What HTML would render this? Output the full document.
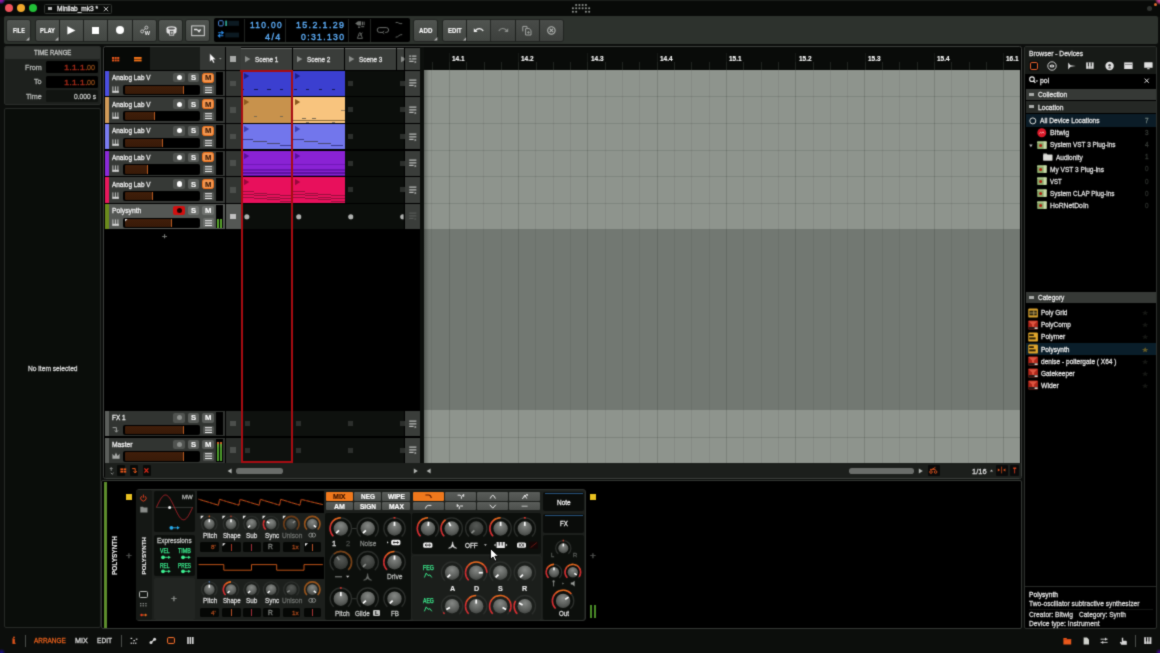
<!DOCTYPE html>
<html lang="en"><head><meta charset="utf-8"><title>Bitwig Studio - Minilab_mk3</title>
<style>
html,body{margin:0;padding:0;background:#0c0e0c;}
body{width:1160px;height:653px;overflow:hidden;position:relative;font-family:"Liberation Sans",sans-serif;}
#app{position:absolute;left:0;top:0;width:1160px;height:653px;overflow:hidden;background:#0c0e0c;filter:url(#soft);}
section{position:absolute;left:0;top:0;width:0;height:0;}
section>div,section>svg,section>span{position:absolute;display:block;}
.t{white-space:nowrap;transform-origin:0 50%;-webkit-text-stroke:0.26px;}
svg{overflow:visible;}
</style></head><body>
<svg width="0" height="0" style="position:absolute" aria-hidden="true"><filter id="soft" x="0" y="0" width="100%" height="100%" color-interpolation-filters="sRGB"><feConvolveMatrix order="3" kernelMatrix="0.025 0.1 0.025 0.1 0.5 0.1 0.025 0.1 0.025" edgeMode="duplicate" preserveAlpha="true"/></filter></svg>
<div id="app">
<section id="top">
<div style="left:0px;top:0px;width:1160px;height:17px;background:#080a08;"></div>
<div style="left:5.2px;top:4.3px;width:7.6px;height:7.6px;background:#f0545c;border-radius:4px;"></div>
<div style="left:17.2px;top:4.3px;width:7.6px;height:7.6px;background:#f0a82c;border-radius:4px;"></div>
<div style="left:29.2px;top:4.3px;width:7.6px;height:7.6px;background:#22c038;border-radius:4px;"></div>
<div style="left:43.5px;top:3.5px;width:68px;height:10px;background:#0a0c0a;border-radius:1.5px;border:1px solid #30332f;box-sizing:border-box;"></div>
<div style="left:48px;top:7px;width:3.6px;height:3.3px;background:#b8b8b8;"></div>
<span class="t" style="left:56.5px;top:4px;font-size:7.22px;line-height:9px;color:#f0f0f0;transform:scaleX(0.904);">Minilab_mk3 *</span>
<svg style="left:102.5px;top:5.5px;" width="6" height="6" viewBox="0 0 6 6"><path d="M0.8 0.8L5.2 5.2M5.2 0.8L0.8 5.2" stroke="#d0d0d0" stroke-width="0.9" fill="none"/></svg>
<svg style="left:0px;top:0px;" width="1160" height="20" viewBox="0 0 1160 20"><circle cx="576.15" cy="5" r="1.05" fill="#8e928e"/><circle cx="579.4" cy="5" r="1.05" fill="#8e928e"/><circle cx="582.65" cy="5" r="1.05" fill="#8e928e"/><circle cx="585.9" cy="5" r="1.05" fill="#8e928e"/><circle cx="572.9" cy="8.3" r="1.05" fill="#8e928e"/><circle cx="576.15" cy="8.3" r="1.05" fill="#8e928e"/><circle cx="579.4" cy="8.3" r="1.05" fill="#8e928e"/><circle cx="582.65" cy="8.3" r="1.05" fill="#8e928e"/><circle cx="585.9" cy="8.3" r="1.05" fill="#8e928e"/><circle cx="589.15" cy="8.3" r="1.05" fill="#8e928e"/><circle cx="572.9" cy="11.7" r="1.05" fill="#8e928e"/><circle cx="576.15" cy="11.7" r="1.05" fill="#8e928e"/><circle cx="585.9" cy="11.7" r="1.05" fill="#8e928e"/><circle cx="589.15" cy="11.7" r="1.05" fill="#8e928e"/></svg>
<div style="left:1146.9px;top:5.8px;width:5.2px;height:5.2px;background:#303330;border-radius:3px;"></div>
<div style="left:1153.5px;top:2.6px;width:3.8px;height:3.8px;background:#e06c2c;border-radius:2px;"></div>
<div style="left:0px;top:0px;width:1160px;height:0.8px;background:#1a1d1a;"></div>
<div style="left:0px;top:0px;width:6px;height:5px;background:radial-gradient(circle at 1px 0px,#b41090 0,#6a1c9a 2px,rgba(60,20,120,0) 4.4px);"></div>
<div style="left:1153px;top:0px;width:7px;height:5px;background:radial-gradient(circle at 7px 0px,#d648a8 0,#b03c78 2.4px,rgba(120,30,60,0) 5px);"></div>
<div style="left:3.5px;top:16.2px;width:1154px;height:27.6px;background:#2d322d;border-radius:2px;"></div>
<div style="left:7px;top:19.6px;width:23.2px;height:21px;background:linear-gradient(#505450,#434743);border-radius:2px 2px 2px 2px;box-shadow:0 0 0 0.8px #1f211f;"></div>
<span class="t" style="left:12.8px;top:26px;font-size:7.48px;line-height:9px;color:#ffffff;transform:scaleX(0.728);font-weight:700;-webkit-text-stroke:0.1px;">FILE</span>
<svg style="left:26.2px;top:37px;" width="3.4" height="3.4" viewBox="0 0 3.4 3.4"><path d="M3.4 0V3.4H0Z" fill="#b0b0b0"/></svg>
<div style="left:36px;top:19.6px;width:23.4px;height:21px;background:linear-gradient(#505450,#434743);border-radius:2px 0px 0px 2px;box-shadow:0 0 0 0.8px #1f211f;"></div>
<span class="t" style="left:40px;top:26px;font-size:7.48px;line-height:9px;color:#ffffff;transform:scaleX(0.779);font-weight:700;-webkit-text-stroke:0.1px;">PLAY</span>
<svg style="left:55.4px;top:37px;" width="3.4" height="3.4" viewBox="0 0 3.4 3.4"><path d="M3.4 0V3.4H0Z" fill="#b0b0b0"/></svg>
<div style="left:60.2px;top:19.6px;width:23.2px;height:21px;background:linear-gradient(#505450,#434743);border-radius:0px 0px 0px 0px;box-shadow:0 0 0 0.8px #1f211f;"></div>
<svg style="left:67.2px;top:25.8px;" width="9" height="9" viewBox="0 0 9 9"><path d="M0.4 0.3L8.4 4.4L0.4 8.5Z" fill="#fff"/></svg>
<div style="left:84.2px;top:19.6px;width:23.2px;height:21px;background:linear-gradient(#505450,#434743);border-radius:0px 0px 0px 0px;box-shadow:0 0 0 0.8px #1f211f;"></div>
<div style="left:92.3px;top:26.8px;width:6.8px;height:6.8px;background:#fff;"></div>
<div style="left:108.2px;top:19.6px;width:23.6px;height:21px;background:linear-gradient(#505450,#434743);border-radius:0px 0px 0px 0px;box-shadow:0 0 0 0.8px #1f211f;"></div>
<div style="left:115.8px;top:26.2px;width:8.2px;height:8.2px;background:#fff;border-radius:5px;"></div>
<div style="left:132.6px;top:19.6px;width:23.4px;height:21px;background:linear-gradient(#505450,#434743);border-radius:0px 2px 2px 0px;box-shadow:0 0 0 0.8px #1f211f;"></div>
<svg style="left:138.5px;top:25px;" width="13" height="11" viewBox="0 0 13 11"><g fill="none" stroke="#d0d0d0" stroke-width="0.9"><circle cx="3.2" cy="6.4" r="1.5"/><circle cx="7.4" cy="2.6" r="1.5"/><path d="M4.3 5.4L6.300 3.6"/></g><text x="5.7" y="9.7" font-size="5.6" font-weight="700" fill="#f0f0f0" font-family="Liberation Sans,sans-serif" textLength="5.2" lengthAdjust="spacingAndGlyphs">W</text></svg>
<div style="left:159.2px;top:19.6px;width:23.2px;height:21px;background:linear-gradient(#505450,#434743);border-radius:2px 2px 2px 2px;box-shadow:0 0 0 0.8px #1f211f;"></div>
<svg style="left:164.5px;top:25px;" width="13" height="11" viewBox="0 0 13 11"><g fill="#e0e0e0"><ellipse cx="6.5" cy="3.4" rx="5" ry="2.2"/><path d="M1.5 3.4h10v3.4a5 2.2 0 0 1 -10 0z"/></g><ellipse cx="6.5" cy="3.5" rx="3.4" ry="1.1" fill="#555"/><rect x="4.6" y="5.6" width="4.2" height="4.6" fill="#4a4d4a" stroke="#e0e0e0" stroke-width="0.8"/><path d="M5.4 7.9h2.6M6.7 6.6v2.6" stroke="#e0e0e0" stroke-width="0.7"/></svg>
<div style="left:186.2px;top:19.6px;width:23.2px;height:21px;background:linear-gradient(#505450,#434743);border-radius:2px 2px 2px 2px;box-shadow:0 0 0 0.8px #1f211f;"></div>
<svg style="left:190.5px;top:24.5px;" width="15" height="12" viewBox="0 0 15 12"><rect x="0.7" y="0.9" width="12.6" height="9.8" fill="none" stroke="#e0e0e0" stroke-width="0.9"/><path d="M3 4.4h3.2M6.4 4.6L8 6.6L9.6 4.4" stroke="#e8e8e8" stroke-width="1.5" fill="none"/></svg>
<div style="left:213.6px;top:18.2px;width:196px;height:24px;background:#000;border-radius:2px;"></div>
<div style="left:244.2px;top:18.6px;width:0.9px;height:23.2px;background:#1f221f;"></div>
<div style="left:285.2px;top:18.6px;width:0.9px;height:23.2px;background:#1f221f;"></div>
<div style="left:348.2px;top:18.6px;width:0.9px;height:23.2px;background:#1f221f;"></div>
<div style="left:370px;top:18.6px;width:0.9px;height:23.2px;background:#1f221f;"></div>
<svg style="left:216px;top:19px;" width="26" height="22" viewBox="0 0 26 22"><rect x="2.6" y="1.7" width="4.6" height="5.2" rx="1" fill="none" stroke="#4a86d8" stroke-width="1"/><rect x="9.2" y="1.6" width="1.9" height="5.4" fill="#2e9c8c"/><rect x="12.2" y="1.8" width="10.8" height="5" fill="#0c1a22"/><path d="M2.2 16.2h5M5.4 14.6l1.9 1.6l-1.9 1.6M7.4 19.2h-5M4.2 17.6l-1.9 1.6l1.9 1.6" stroke="#2c8ce8" stroke-width="1.1" fill="none" transform="translate(0,-2.4)"/><rect x="9.2" y="14.2" width="13.8" height="4.8" fill="#0c1a22" transform="translate(0,-0.6)"/></svg>
<span class="t" style="left:249.6px;top:19px;font-size:9.57px;line-height:11px;color:#5cacf6;transform:scaleX(0.875);letter-spacing:1.5px;-webkit-text-stroke:0.4px;">110.00</span>
<span class="t" style="left:265px;top:31px;font-size:9.57px;line-height:11px;color:#5cacf6;transform:scaleX(0.938);letter-spacing:1.5px;-webkit-text-stroke:0.4px;">4/4</span>
<span class="t" style="left:295.6px;top:19px;font-size:9.57px;line-height:11px;color:#5cacf6;transform:scaleX(0.924);letter-spacing:1.5px;-webkit-text-stroke:0.4px;">15.2.1.29</span>
<span class="t" style="left:300.6px;top:31px;font-size:9.57px;line-height:11px;color:#5cacf6;transform:scaleX(0.900);letter-spacing:1.5px;-webkit-text-stroke:0.4px;">0:31.130</span>
<svg style="left:353px;top:19px;" width="14" height="22" viewBox="0 0 14 22"><path d="M2.2 4.4L5 2.2h3.2v4.4H5Z" fill="#6a6d6a"/><rect x="9" y="2.6" width="1" height="3.6" fill="#6a6d6a"/><rect x="10.6" y="2.6" width="1" height="3.6" fill="#6a6d6a"/><rect x="5" y="7.6" width="2.2" height="1.2" fill="#6a6d6a"/><rect x="8.2" y="7.2" width="3" height="1" fill="#6a6d6a"/><path d="M4.4 19.4L6.4 13.8h1L9.4 19.4ZM6.6 17l2.8-3.4" fill="none" stroke="#6a6d6a" stroke-width="0.9"/></svg>
<svg style="left:374px;top:19px;" width="34" height="22" viewBox="0 0 34 22"><path d="M5.6 8.6h6.6a2.4 2.4 0 0 1 0 4.8h-1M9 13.4h-3.4a2.4 2.4 0 0 1 0 -4.8" fill="none" stroke="#6a6d6a" stroke-width="1"/><path d="M10.2 12l-1.6 1.4l1.6 1.4" fill="none" stroke="#6a6d6a" stroke-width="0.9"/><path d="M21.6 3.6c2.4-1.2 3.2 1.8 6.6 1" fill="none" stroke="#6a6d6a" stroke-width="0.9"/><path d="M21.6 18.2c3 0.2 3.200-3 6.6-2.6" fill="none" stroke="#6a6d6a" stroke-width="0.9"/></svg>
<div style="left:414.2px;top:19.6px;width:23.2px;height:21px;background:linear-gradient(#505450,#434743);border-radius:2px 2px 2px 2px;box-shadow:0 0 0 0.8px #1f211f;"></div>
<span class="t" style="left:418.9px;top:26px;font-size:7.48px;line-height:9px;color:#ffffff;transform:scaleX(0.827);font-weight:700;-webkit-text-stroke:0.1px;">ADD</span>
<svg style="left:433.6px;top:37px;" width="3.4" height="3.4" viewBox="0 0 3.4 3.4"><path d="M3.4 0V3.4H0Z" fill="#b0b0b0"/></svg>
<div style="left:443.2px;top:19.6px;width:23.2px;height:21px;background:linear-gradient(#505450,#434743);border-radius:2px 0px 0px 2px;box-shadow:0 0 0 0.8px #1f211f;"></div>
<span class="t" style="left:447.5px;top:26px;font-size:7.48px;line-height:9px;color:#ffffff;transform:scaleX(0.810);font-weight:700;-webkit-text-stroke:0.1px;">EDIT</span>
<svg style="left:462.6px;top:37px;" width="3.4" height="3.4" viewBox="0 0 3.4 3.4"><path d="M3.4 0V3.4H0Z" fill="#b0b0b0"/></svg>
<div style="left:467.2px;top:19.6px;width:23.4px;height:21px;background:linear-gradient(#505450,#434743);border-radius:0px 0px 0px 0px;box-shadow:0 0 0 0.8px #1f211f;"></div>
<svg style="left:472px;top:25px;" width="14" height="11" viewBox="0 0 14 11"><path d="M3.2 5.8c2.400-3 6.200-3 8 0.200" fill="none" stroke="#f0f0f0" stroke-width="1.3"/><path d="M1.800 3.200v3.800h3.800z" fill="#f0f0f0"/></svg>
<div style="left:491.4px;top:19.6px;width:23.6px;height:21px;background:linear-gradient(#484b48,#3d403d);border-radius:0px 0px 0px 0px;box-shadow:0 0 0 0.8px #1f211f;"></div>
<svg style="left:496px;top:25px;" width="14" height="11" viewBox="0 0 14 11"><path d="M10.8 5.8c-2.400-3-6.200-3-8 0.200" fill="none" stroke="#8c8f8c" stroke-width="1.1"/><path d="M12.200 3.200v3.800h-3.800z" fill="#8c8f8c"/></svg>
<div style="left:515.8px;top:19.6px;width:23.4px;height:21px;background:linear-gradient(#484b48,#3d403d);border-radius:0px 0px 0px 0px;box-shadow:0 0 0 0.8px #1f211f;"></div>
<svg style="left:521px;top:25px;" width="12" height="11" viewBox="0 0 12 11"><path d="M1.800 6.400v-5h4.200v1.600" fill="none" stroke="#a0a3a0" stroke-width="1"/><path d="M4.600 3.600h3.600l1.800 1.800v4.600h-5.400z" fill="none" stroke="#a0a3a0" stroke-width="1"/><path d="M6 7.400h2.800M7.400 6v2.800" stroke="#a0a3a0" stroke-width="0.8"/></svg>
<div style="left:540px;top:19.6px;width:23.2px;height:21px;background:linear-gradient(#484b48,#3d403d);border-radius:0px 2px 2px 0px;box-shadow:0 0 0 0.8px #1f211f;"></div>
<svg style="left:546px;top:25px;" width="11" height="11" viewBox="0 0 11 11"><circle cx="5.400" cy="5.400" r="3.700" fill="none" stroke="#b4b7b4" stroke-width="1.1"/><path d="M3.600 3.600l3.600 3.600M7.200 3.600l-3.600 3.600" stroke="#b4b7b4" stroke-width="1.1"/></svg>
</section>
<section id="left">
<div style="left:4px;top:45.9px;width:97px;height:58.7px;background:#1d201d;border-radius:2px;border:1px solid #2a2d2a;box-sizing:border-box;"></div>
<div style="left:4.6px;top:46.5px;width:95.8px;height:12.3px;background:#2e312e;border-radius:1px;"></div>
<span class="t" style="left:33.9px;top:49px;font-size:6.35px;line-height:7px;color:#c4c6c4;transform:scaleX(0.946);">TIME RANGE</span>
<span class="t" style="left:24.6px;top:64px;font-size:6.96px;line-height:7px;color:#b8bab8;transform:scaleX(1.034);">From</span>
<div style="left:45.6px;top:61.2px;width:52.6px;height:12.2px;background:#000;border-radius:1.5px;"></div>
<span class="t" style="left:63.6px;top:63px;font-size:7.31px;line-height:9px;color:#a42a18;transform:scaleX(1.290);">1.1.1.</span>
<span class="t" style="left:87.2px;top:63px;font-size:7.31px;line-height:9px;color:#8e4a18;transform:scaleX(0.984);">00</span>
<span class="t" style="left:33.8px;top:78px;font-size:6.96px;line-height:7px;color:#b8bab8;transform:scaleX(1.034);">To</span>
<div style="left:45.6px;top:75.6px;width:52.6px;height:12.2px;background:#000;border-radius:1.5px;"></div>
<span class="t" style="left:63.6px;top:78px;font-size:7.31px;line-height:9px;color:#a42a18;transform:scaleX(1.290);">1.1.1.</span>
<span class="t" style="left:87.2px;top:78px;font-size:7.31px;line-height:9px;color:#8e4a18;transform:scaleX(0.984);">00</span>
<span class="t" style="left:25.67px;top:93px;font-size:6.96px;line-height:7px;color:#b8bab8;transform:scaleX(1.034);">Time</span>
<div style="left:45.6px;top:90px;width:52.6px;height:12.2px;background:#111411;border-radius:1.5px;"></div>
<span class="t" style="left:74px;top:93px;font-size:6.96px;line-height:7px;color:#c8cac8;transform:scaleX(0.964);">0.000 s</span>
<div style="left:4px;top:107.6px;width:97px;height:520.8px;background:#0a0d0a;border-radius:2px;border:1px solid #262926;box-sizing:border-box;"></div>
<span class="t" style="left:27.6px;top:365px;font-size:6.79px;line-height:7px;color:#dcdcdc;transform:scaleX(0.981);">No item selected</span>
</section>
<section id="arr">
<div style="left:103.4px;top:45.9px;width:918.4px;height:432.9px;background:#000;border-radius:2.5px;border:1px solid #3c3f3c;box-sizing:border-box;"></div>
<div style="left:104.6px;top:47px;width:45.4px;height:22.6px;background:#070907;"></div>
<div style="left:150.4px;top:47px;width:49.4px;height:22.6px;background:#1a1d1a;"></div>
<svg style="left:112.2px;top:56.8px;" width="8" height="5" viewBox="0 0 8 5"><rect x="0" y="0" width="2.100" height="1.900" fill="#e8581c"/><rect x="0" y="2.5" width="2.100" height="1.900" fill="#e8581c"/><rect x="2.6" y="0" width="2.100" height="1.900" fill="#e8581c"/><rect x="2.6" y="2.5" width="2.100" height="1.900" fill="#e8581c"/><rect x="5.2" y="0" width="2.100" height="1.900" fill="#e8581c"/><rect x="5.2" y="2.5" width="2.100" height="1.900" fill="#e8581c"/></svg>
<svg style="left:134.2px;top:56.8px;" width="8" height="5" viewBox="0 0 8 5"><rect x="0" y="0" width="7.600" height="1.900" fill="#f47418"/><rect x="0" y="2.500" width="7.600" height="1.900" fill="#f47418"/></svg>
<div style="left:200.4px;top:47px;width:24.8px;height:22.6px;background:#343734;"></div>
<svg style="left:208.6px;top:53.4px;" width="9" height="11" viewBox="0 0 9 11"><path d="M0.800 0.600v8.200l2-1.800l1.400 3l1.400-0.600l-1.400-3h2.600z" fill="#fff" stroke="#222" stroke-width="0.3"/></svg>
<svg style="left:219.4px;top:57.6px;" width="3" height="2" viewBox="0 0 3 2"><path d="M0 0h2.600l-1.300 1.600z" fill="#909390"/></svg>
<div style="left:226px;top:47px;width:14.6px;height:22.6px;background:#373a37;"></div>
<div style="left:230.2px;top:56.2px;width:5.6px;height:5.6px;background:#a8aaa8;"></div>
<div style="left:241.2px;top:47.6px;width:51px;height:22px;background:#3a3d3a;"></div>
<div style="left:241.2px;top:47.6px;width:51px;height:1px;background:#6a6d6a;"></div>
<svg style="left:245.2px;top:56.4px;" width="6" height="7" viewBox="0 0 6 7"><path d="M0 0L5.400 3.100L0 6.200Z" fill="#8a8d8a"/></svg>
<span class="t" style="left:255.4px;top:56px;font-size:7.13px;line-height:8px;color:#e8e8e8;transform:scaleX(0.894);">Scene 1</span>
<div style="left:293px;top:47.6px;width:51.4px;height:22px;background:#3a3d3a;"></div>
<div style="left:293px;top:47.6px;width:51.4px;height:1px;background:#6a6d6a;"></div>
<svg style="left:297px;top:56.4px;" width="6" height="7" viewBox="0 0 6 7"><path d="M0 0L5.400 3.100L0 6.200Z" fill="#8a8d8a"/></svg>
<span class="t" style="left:307.2px;top:56px;font-size:7.13px;line-height:8px;color:#e8e8e8;transform:scaleX(0.894);">Scene 2</span>
<div style="left:345px;top:47.6px;width:51.4px;height:22px;background:#3a3d3a;"></div>
<div style="left:345px;top:47.6px;width:51.4px;height:1px;background:#6a6d6a;"></div>
<svg style="left:349px;top:56.4px;" width="6" height="7" viewBox="0 0 6 7"><path d="M0 0L5.400 3.100L0 6.200Z" fill="#8a8d8a"/></svg>
<span class="t" style="left:359.2px;top:56px;font-size:7.13px;line-height:8px;color:#e8e8e8;transform:scaleX(0.894);">Scene 3</span>
<div style="left:397px;top:47.6px;width:7.4px;height:22px;background:#3a3d3a;"></div>
<div style="left:397px;top:47.6px;width:7.4px;height:1px;background:#6a6d6a;"></div>
<svg style="left:401px;top:56.4px;clip-path:inset(0 2.6px 0 0);" width="6" height="7" viewBox="0 0 6 7"><path d="M0 0L5.400 3.100L0 6.200Z" fill="#8a8d8a"/></svg>
<div style="left:405px;top:47.6px;width:15.4px;height:22px;background:#3a3d3a;"></div>
<svg style="left:408.8px;top:54.6px;" width="9" height="9" viewBox="0 0 9 9"><path d="M0.200 1.200h7.200M0.200 3.800h7.200M0.200 6.400h4.400" stroke="#b8bab8" stroke-width="1.300"/><path d="M2.600 0v4.600" stroke="#3a3d3a" stroke-width="0.800"/><path d="M5.600 5.800l2 1.200l-2 1.200z" fill="#b8bab8"/></svg>
<div style="left:424px;top:47px;width:596.4px;height:23px;background:#090b09;"></div>
<div style="left:424px;top:70px;width:596.4px;height:159.2px;background:#8e948d;"></div>
<div style="left:424px;top:229.2px;width:596.4px;height:181.2px;background:#727872;"></div>
<div style="left:424px;top:410.4px;width:596.4px;height:52.8px;background:#8e948d;"></div>
<div style="left:431.48px;top:70px;width:1px;height:392.8px;background:rgba(40,44,40,0.09);"></div>
<div style="left:431.58px;top:62px;width:0.8px;height:8px;background:#202320;"></div>
<div style="left:448.8px;top:70px;width:1px;height:392.8px;background:rgba(40,44,40,0.18);"></div>
<div style="left:448.9px;top:53px;width:0.8px;height:17px;background:#161916;"></div>
<div style="left:448.9px;top:62px;width:0.8px;height:8px;background:#202320;"></div>
<div style="left:466.12px;top:70px;width:1px;height:392.8px;background:rgba(40,44,40,0.09);"></div>
<div style="left:466.22px;top:62px;width:0.8px;height:8px;background:#202320;"></div>
<div style="left:483.44px;top:70px;width:1px;height:392.8px;background:rgba(40,44,40,0.09);"></div>
<div style="left:483.54px;top:62px;width:0.8px;height:8px;background:#202320;"></div>
<div style="left:500.76px;top:70px;width:1px;height:392.8px;background:rgba(40,44,40,0.09);"></div>
<div style="left:500.86px;top:62px;width:0.8px;height:8px;background:#202320;"></div>
<div style="left:518.08px;top:70px;width:1px;height:392.8px;background:rgba(40,44,40,0.18);"></div>
<div style="left:518.18px;top:53px;width:0.8px;height:17px;background:#161916;"></div>
<div style="left:518.18px;top:62px;width:0.8px;height:8px;background:#202320;"></div>
<div style="left:535.4px;top:70px;width:1px;height:392.8px;background:rgba(40,44,40,0.09);"></div>
<div style="left:535.5px;top:62px;width:0.8px;height:8px;background:#202320;"></div>
<div style="left:552.72px;top:70px;width:1px;height:392.8px;background:rgba(40,44,40,0.09);"></div>
<div style="left:552.82px;top:62px;width:0.8px;height:8px;background:#202320;"></div>
<div style="left:570.04px;top:70px;width:1px;height:392.8px;background:rgba(40,44,40,0.09);"></div>
<div style="left:570.14px;top:62px;width:0.8px;height:8px;background:#202320;"></div>
<div style="left:587.36px;top:70px;width:1px;height:392.8px;background:rgba(40,44,40,0.18);"></div>
<div style="left:587.46px;top:53px;width:0.8px;height:17px;background:#161916;"></div>
<div style="left:587.46px;top:62px;width:0.8px;height:8px;background:#202320;"></div>
<div style="left:604.68px;top:70px;width:1px;height:392.8px;background:rgba(40,44,40,0.09);"></div>
<div style="left:604.78px;top:62px;width:0.8px;height:8px;background:#202320;"></div>
<div style="left:622px;top:70px;width:1px;height:392.8px;background:rgba(40,44,40,0.09);"></div>
<div style="left:622.1px;top:62px;width:0.8px;height:8px;background:#202320;"></div>
<div style="left:639.32px;top:70px;width:1px;height:392.8px;background:rgba(40,44,40,0.09);"></div>
<div style="left:639.42px;top:62px;width:0.8px;height:8px;background:#202320;"></div>
<div style="left:656.64px;top:70px;width:1px;height:392.8px;background:rgba(40,44,40,0.18);"></div>
<div style="left:656.74px;top:53px;width:0.8px;height:17px;background:#161916;"></div>
<div style="left:656.74px;top:62px;width:0.8px;height:8px;background:#202320;"></div>
<div style="left:673.96px;top:70px;width:1px;height:392.8px;background:rgba(40,44,40,0.09);"></div>
<div style="left:674.06px;top:62px;width:0.8px;height:8px;background:#202320;"></div>
<div style="left:691.28px;top:70px;width:1px;height:392.8px;background:rgba(40,44,40,0.09);"></div>
<div style="left:691.38px;top:62px;width:0.8px;height:8px;background:#202320;"></div>
<div style="left:708.6px;top:70px;width:1px;height:392.8px;background:rgba(40,44,40,0.09);"></div>
<div style="left:708.7px;top:62px;width:0.8px;height:8px;background:#202320;"></div>
<div style="left:725.92px;top:70px;width:1px;height:392.8px;background:rgba(40,44,40,0.18);"></div>
<div style="left:726.02px;top:53px;width:0.8px;height:17px;background:#161916;"></div>
<div style="left:726.02px;top:62px;width:0.8px;height:8px;background:#202320;"></div>
<div style="left:743.24px;top:70px;width:1px;height:392.8px;background:rgba(40,44,40,0.09);"></div>
<div style="left:743.34px;top:62px;width:0.8px;height:8px;background:#202320;"></div>
<div style="left:760.56px;top:70px;width:1px;height:392.8px;background:rgba(40,44,40,0.09);"></div>
<div style="left:760.66px;top:62px;width:0.8px;height:8px;background:#202320;"></div>
<div style="left:777.88px;top:70px;width:1px;height:392.8px;background:rgba(40,44,40,0.09);"></div>
<div style="left:777.98px;top:62px;width:0.8px;height:8px;background:#202320;"></div>
<div style="left:795.2px;top:70px;width:1px;height:392.8px;background:rgba(40,44,40,0.18);"></div>
<div style="left:795.3px;top:53px;width:0.8px;height:17px;background:#161916;"></div>
<div style="left:795.3px;top:62px;width:0.8px;height:8px;background:#202320;"></div>
<div style="left:812.52px;top:70px;width:1px;height:392.8px;background:rgba(40,44,40,0.09);"></div>
<div style="left:812.62px;top:62px;width:0.8px;height:8px;background:#202320;"></div>
<div style="left:829.84px;top:70px;width:1px;height:392.8px;background:rgba(40,44,40,0.09);"></div>
<div style="left:829.94px;top:62px;width:0.8px;height:8px;background:#202320;"></div>
<div style="left:847.16px;top:70px;width:1px;height:392.8px;background:rgba(40,44,40,0.09);"></div>
<div style="left:847.26px;top:62px;width:0.8px;height:8px;background:#202320;"></div>
<div style="left:864.48px;top:70px;width:1px;height:392.8px;background:rgba(40,44,40,0.18);"></div>
<div style="left:864.58px;top:53px;width:0.8px;height:17px;background:#161916;"></div>
<div style="left:864.58px;top:62px;width:0.8px;height:8px;background:#202320;"></div>
<div style="left:881.8px;top:70px;width:1px;height:392.8px;background:rgba(40,44,40,0.09);"></div>
<div style="left:881.9px;top:62px;width:0.8px;height:8px;background:#202320;"></div>
<div style="left:899.12px;top:70px;width:1px;height:392.8px;background:rgba(40,44,40,0.09);"></div>
<div style="left:899.22px;top:62px;width:0.8px;height:8px;background:#202320;"></div>
<div style="left:916.44px;top:70px;width:1px;height:392.8px;background:rgba(40,44,40,0.09);"></div>
<div style="left:916.54px;top:62px;width:0.8px;height:8px;background:#202320;"></div>
<div style="left:933.76px;top:70px;width:1px;height:392.8px;background:rgba(40,44,40,0.18);"></div>
<div style="left:933.86px;top:53px;width:0.8px;height:17px;background:#161916;"></div>
<div style="left:933.86px;top:62px;width:0.8px;height:8px;background:#202320;"></div>
<div style="left:951.08px;top:70px;width:1px;height:392.8px;background:rgba(40,44,40,0.09);"></div>
<div style="left:951.18px;top:62px;width:0.8px;height:8px;background:#202320;"></div>
<div style="left:968.4px;top:70px;width:1px;height:392.8px;background:rgba(40,44,40,0.09);"></div>
<div style="left:968.5px;top:62px;width:0.8px;height:8px;background:#202320;"></div>
<div style="left:985.72px;top:70px;width:1px;height:392.8px;background:rgba(40,44,40,0.09);"></div>
<div style="left:985.82px;top:62px;width:0.8px;height:8px;background:#202320;"></div>
<div style="left:1003.04px;top:70px;width:1px;height:392.8px;background:rgba(40,44,40,0.18);"></div>
<div style="left:1003.14px;top:53px;width:0.8px;height:17px;background:#161916;"></div>
<div style="left:1003.14px;top:62px;width:0.8px;height:8px;background:#202320;"></div>
<span class="t" style="left:452.1px;top:55px;font-size:6.96px;line-height:7px;color:#ffffff;transform:scaleX(0.930);font-weight:700;-webkit-text-stroke:0.1px;">14.1</span>
<span class="t" style="left:521.38px;top:55px;font-size:6.96px;line-height:7px;color:#ffffff;transform:scaleX(0.930);font-weight:700;-webkit-text-stroke:0.1px;">14.2</span>
<span class="t" style="left:590.66px;top:55px;font-size:6.96px;line-height:7px;color:#ffffff;transform:scaleX(0.930);font-weight:700;-webkit-text-stroke:0.1px;">14.3</span>
<span class="t" style="left:659.94px;top:55px;font-size:6.96px;line-height:7px;color:#ffffff;transform:scaleX(0.930);font-weight:700;-webkit-text-stroke:0.1px;">14.4</span>
<span class="t" style="left:729.22px;top:55px;font-size:6.96px;line-height:7px;color:#ffffff;transform:scaleX(0.930);font-weight:700;-webkit-text-stroke:0.1px;">15.1</span>
<span class="t" style="left:798.5px;top:55px;font-size:6.96px;line-height:7px;color:#ffffff;transform:scaleX(0.930);font-weight:700;-webkit-text-stroke:0.1px;">15.2</span>
<span class="t" style="left:867.78px;top:55px;font-size:6.96px;line-height:7px;color:#ffffff;transform:scaleX(0.930);font-weight:700;-webkit-text-stroke:0.1px;">15.3</span>
<span class="t" style="left:937.06px;top:55px;font-size:6.96px;line-height:7px;color:#ffffff;transform:scaleX(0.930);font-weight:700;-webkit-text-stroke:0.1px;">15.4</span>
<span class="t" style="left:1006.34px;top:55px;font-size:6.96px;line-height:7px;color:#ffffff;transform:scaleX(0.930);font-weight:700;-webkit-text-stroke:0.1px;">16.1</span>
<div style="left:424px;top:96.3px;width:596.4px;height:1px;background:rgba(40,44,40,0.15);"></div>
<div style="left:424px;top:122.9px;width:596.4px;height:1px;background:rgba(40,44,40,0.15);"></div>
<div style="left:424px;top:149.5px;width:596.4px;height:1px;background:rgba(40,44,40,0.15);"></div>
<div style="left:424px;top:176.1px;width:596.4px;height:1px;background:rgba(40,44,40,0.15);"></div>
<div style="left:424px;top:202.7px;width:596.4px;height:1px;background:rgba(40,44,40,0.15);"></div>
<div style="left:424px;top:436.5px;width:596.4px;height:1px;background:rgba(40,44,40,0.16);"></div>
<div style="left:420.4px;top:47px;width:3.6px;height:416px;background:#0c0f0c;"></div>
<div style="left:424px;top:70px;width:5px;height:392.8px;background:linear-gradient(90deg,rgba(20,24,20,0.35),rgba(20,24,20,0));"></div>
<div style="left:241px;top:70px;width:179.4px;height:393px;background:#000;"></div>
<div style="left:105px;top:70.7px;width:120.4px;height:25.6px;background:#363936;"></div>
<div style="left:105px;top:70.7px;width:3.8px;height:25.6px;background:#4a4ee0;"></div>
<span class="t" style="left:112px;top:74px;font-size:7.13px;line-height:8px;color:#f0f0f0;transform:scaleX(0.902);">Analog Lab V</span>
<div style="left:173.4px;top:72.8px;width:11.6px;height:9.6px;background:#505350;border-radius:2px;"></div>
<div style="left:176.6px;top:75px;width:5.2px;height:5.2px;background:#fff;border-radius:3px;"></div>
<div style="left:188px;top:72.8px;width:11.4px;height:9.6px;background:#595c59;border-radius:2px;"></div>
<span class="t" style="left:191.12px;top:73px;font-size:7.48px;line-height:9px;color:#ffffff;transform:scaleX(1.035);font-weight:700;-webkit-text-stroke:0.1px;">S</span>
<div style="left:202px;top:72.6px;width:12.2px;height:10px;background:#f09650;border-radius:2.5px;border:1.4px solid #f07018;box-sizing:border-box;"></div>
<span class="t" style="left:204.88px;top:73px;font-size:7.48px;line-height:9px;color:#3a1a08;transform:scaleX(1.035);font-weight:700;-webkit-text-stroke:0.1px;">M</span>
<svg style="left:112px;top:85.6px;" width="8" height="8" viewBox="0 0 8 8"><path d="M0.9 0.4v6.400M3.400 0.400v6.400M5.900 0.400v6.400" stroke="#d0d0d0" stroke-width="0.9"/><path d="M0.400 5.800h6.400" stroke="#d0d0d0" stroke-width="2"/></svg>
<div style="left:123.2px;top:84.6px;width:77px;height:10.2px;background:#000;border-radius:2px;"></div>
<div style="left:124.6px;top:85.6px;width:58.4px;height:8.2px;background:linear-gradient(#401e0a,#381a08);border-radius:1px;"></div>
<div style="left:182.5px;top:85.6px;width:1px;height:8.2px;background:#b85a20;"></div>
<div style="left:202.6px;top:85.4px;width:11.4px;height:8.6px;background:#505350;border-radius:1.5px;"></div>
<svg style="left:204.8px;top:86.6px;" width="7" height="7" viewBox="0 0 7 7"><path d="M0 0.700h7M0 3.100h7M0 5.500h7" stroke="#f0f0f0" stroke-width="1"/></svg>
<div style="left:216.4px;top:72px;width:6.6px;height:22.8px;background:#000;"></div>
<div style="left:226px;top:70.7px;width:14.6px;height:25.6px;background:#323532;"></div>
<div style="left:230.2px;top:80.6px;width:5.6px;height:5.6px;background:#4c4f4c;"></div>
<div style="left:105px;top:97.3px;width:120.4px;height:25.6px;background:#363936;"></div>
<div style="left:105px;top:97.3px;width:3.8px;height:25.6px;background:#d09a58;"></div>
<span class="t" style="left:112px;top:101px;font-size:7.13px;line-height:8px;color:#f0f0f0;transform:scaleX(0.902);">Analog Lab V</span>
<div style="left:173.4px;top:99.4px;width:11.6px;height:9.6px;background:#505350;border-radius:2px;"></div>
<div style="left:176.6px;top:101.6px;width:5.2px;height:5.2px;background:#fff;border-radius:3px;"></div>
<div style="left:188px;top:99.4px;width:11.4px;height:9.6px;background:#595c59;border-radius:2px;"></div>
<span class="t" style="left:191.12px;top:100px;font-size:7.48px;line-height:9px;color:#ffffff;transform:scaleX(1.035);font-weight:700;-webkit-text-stroke:0.1px;">S</span>
<div style="left:202px;top:99.2px;width:12.2px;height:10px;background:#f09650;border-radius:2.5px;border:1.4px solid #f07018;box-sizing:border-box;"></div>
<span class="t" style="left:204.88px;top:100px;font-size:7.48px;line-height:9px;color:#3a1a08;transform:scaleX(1.035);font-weight:700;-webkit-text-stroke:0.1px;">M</span>
<svg style="left:112px;top:112.2px;" width="8" height="8" viewBox="0 0 8 8"><path d="M0.9 0.4v6.400M3.400 0.400v6.400M5.900 0.400v6.400" stroke="#d0d0d0" stroke-width="0.9"/><path d="M0.400 5.800h6.400" stroke="#d0d0d0" stroke-width="2"/></svg>
<div style="left:123.2px;top:111.2px;width:77px;height:10.2px;background:#000;border-radius:2px;"></div>
<div style="left:124.6px;top:112.2px;width:29.4px;height:8.2px;background:linear-gradient(#401e0a,#381a08);border-radius:1px;"></div>
<div style="left:153.5px;top:112.2px;width:1px;height:8.2px;background:#b85a20;"></div>
<div style="left:202.6px;top:112px;width:11.4px;height:8.6px;background:#505350;border-radius:1.5px;"></div>
<svg style="left:204.8px;top:113.2px;" width="7" height="7" viewBox="0 0 7 7"><path d="M0 0.700h7M0 3.100h7M0 5.500h7" stroke="#f0f0f0" stroke-width="1"/></svg>
<div style="left:216.4px;top:98.6px;width:6.6px;height:22.8px;background:#000;"></div>
<div style="left:226px;top:97.3px;width:14.6px;height:25.6px;background:#323532;"></div>
<div style="left:230.2px;top:107.2px;width:5.6px;height:5.6px;background:#4c4f4c;"></div>
<div style="left:105px;top:123.9px;width:120.4px;height:25.6px;background:#363936;"></div>
<div style="left:105px;top:123.9px;width:3.8px;height:25.6px;background:#7a7cf0;"></div>
<span class="t" style="left:112px;top:127px;font-size:7.13px;line-height:8px;color:#f0f0f0;transform:scaleX(0.902);">Analog Lab V</span>
<div style="left:173.4px;top:126px;width:11.6px;height:9.6px;background:#505350;border-radius:2px;"></div>
<div style="left:176.6px;top:128.2px;width:5.2px;height:5.2px;background:#fff;border-radius:3px;"></div>
<div style="left:188px;top:126px;width:11.4px;height:9.6px;background:#595c59;border-radius:2px;"></div>
<span class="t" style="left:191.12px;top:126px;font-size:7.48px;line-height:9px;color:#ffffff;transform:scaleX(1.035);font-weight:700;-webkit-text-stroke:0.1px;">S</span>
<div style="left:202px;top:125.8px;width:12.2px;height:10px;background:#f09650;border-radius:2.5px;border:1.4px solid #f07018;box-sizing:border-box;"></div>
<span class="t" style="left:204.88px;top:126px;font-size:7.48px;line-height:9px;color:#3a1a08;transform:scaleX(1.035);font-weight:700;-webkit-text-stroke:0.1px;">M</span>
<svg style="left:112px;top:138.8px;" width="8" height="8" viewBox="0 0 8 8"><path d="M0.9 0.4v6.400M3.400 0.400v6.400M5.900 0.400v6.400" stroke="#d0d0d0" stroke-width="0.9"/><path d="M0.400 5.800h6.400" stroke="#d0d0d0" stroke-width="2"/></svg>
<div style="left:123.2px;top:137.8px;width:77px;height:10.2px;background:#000;border-radius:2px;"></div>
<div style="left:124.6px;top:138.8px;width:37.4px;height:8.2px;background:linear-gradient(#401e0a,#381a08);border-radius:1px;"></div>
<div style="left:161.5px;top:138.8px;width:1px;height:8.2px;background:#b85a20;"></div>
<div style="left:202.6px;top:138.6px;width:11.4px;height:8.6px;background:#505350;border-radius:1.5px;"></div>
<svg style="left:204.8px;top:139.8px;" width="7" height="7" viewBox="0 0 7 7"><path d="M0 0.700h7M0 3.100h7M0 5.500h7" stroke="#f0f0f0" stroke-width="1"/></svg>
<div style="left:216.4px;top:125.2px;width:6.6px;height:22.8px;background:#000;"></div>
<div style="left:226px;top:123.9px;width:14.6px;height:25.6px;background:#323532;"></div>
<div style="left:230.2px;top:133.8px;width:5.6px;height:5.6px;background:#4c4f4c;"></div>
<div style="left:105px;top:150.5px;width:120.4px;height:25.6px;background:#363936;"></div>
<div style="left:105px;top:150.5px;width:3.8px;height:25.6px;background:#8a2ad8;"></div>
<span class="t" style="left:112px;top:154px;font-size:7.13px;line-height:8px;color:#f0f0f0;transform:scaleX(0.902);">Analog Lab V</span>
<div style="left:173.4px;top:152.6px;width:11.6px;height:9.6px;background:#505350;border-radius:2px;"></div>
<div style="left:176.6px;top:154.8px;width:5.2px;height:5.2px;background:#fff;border-radius:3px;"></div>
<div style="left:188px;top:152.6px;width:11.4px;height:9.6px;background:#595c59;border-radius:2px;"></div>
<span class="t" style="left:191.12px;top:153px;font-size:7.48px;line-height:9px;color:#ffffff;transform:scaleX(1.035);font-weight:700;-webkit-text-stroke:0.1px;">S</span>
<div style="left:202px;top:152.4px;width:12.2px;height:10px;background:#f09650;border-radius:2.5px;border:1.4px solid #f07018;box-sizing:border-box;"></div>
<span class="t" style="left:204.88px;top:153px;font-size:7.48px;line-height:9px;color:#3a1a08;transform:scaleX(1.035);font-weight:700;-webkit-text-stroke:0.1px;">M</span>
<svg style="left:112px;top:165.4px;" width="8" height="8" viewBox="0 0 8 8"><path d="M0.9 0.4v6.400M3.400 0.400v6.400M5.900 0.400v6.400" stroke="#d0d0d0" stroke-width="0.9"/><path d="M0.400 5.800h6.400" stroke="#d0d0d0" stroke-width="2"/></svg>
<div style="left:123.2px;top:164.4px;width:77px;height:10.2px;background:#000;border-radius:2px;"></div>
<div style="left:124.6px;top:165.4px;width:22.4px;height:8.2px;background:linear-gradient(#401e0a,#381a08);border-radius:1px;"></div>
<div style="left:146.5px;top:165.4px;width:1px;height:8.2px;background:#b85a20;"></div>
<div style="left:202.6px;top:165.2px;width:11.4px;height:8.6px;background:#505350;border-radius:1.5px;"></div>
<svg style="left:204.8px;top:166.4px;" width="7" height="7" viewBox="0 0 7 7"><path d="M0 0.700h7M0 3.100h7M0 5.500h7" stroke="#f0f0f0" stroke-width="1"/></svg>
<div style="left:216.4px;top:151.8px;width:6.6px;height:22.8px;background:#000;"></div>
<div style="left:226px;top:150.5px;width:14.6px;height:25.6px;background:#323532;"></div>
<div style="left:230.2px;top:160.4px;width:5.6px;height:5.6px;background:#4c4f4c;"></div>
<div style="left:105px;top:177.1px;width:120.4px;height:25.6px;background:#363936;"></div>
<div style="left:105px;top:177.1px;width:3.8px;height:25.6px;background:#e8185c;"></div>
<span class="t" style="left:112px;top:181px;font-size:7.13px;line-height:8px;color:#f0f0f0;transform:scaleX(0.902);">Analog Lab V</span>
<div style="left:173.4px;top:179.2px;width:11.6px;height:9.6px;background:#505350;border-radius:2px;"></div>
<div style="left:176.6px;top:181.4px;width:5.2px;height:5.2px;background:#fff;border-radius:3px;"></div>
<div style="left:188px;top:179.2px;width:11.4px;height:9.6px;background:#595c59;border-radius:2px;"></div>
<span class="t" style="left:191.12px;top:180px;font-size:7.48px;line-height:9px;color:#ffffff;transform:scaleX(1.035);font-weight:700;-webkit-text-stroke:0.1px;">S</span>
<div style="left:202px;top:179px;width:12.2px;height:10px;background:#f09650;border-radius:2.5px;border:1.4px solid #f07018;box-sizing:border-box;"></div>
<span class="t" style="left:204.88px;top:180px;font-size:7.48px;line-height:9px;color:#3a1a08;transform:scaleX(1.035);font-weight:700;-webkit-text-stroke:0.1px;">M</span>
<svg style="left:112px;top:192px;" width="8" height="8" viewBox="0 0 8 8"><path d="M0.9 0.4v6.400M3.400 0.400v6.400M5.900 0.400v6.400" stroke="#d0d0d0" stroke-width="0.9"/><path d="M0.400 5.800h6.400" stroke="#d0d0d0" stroke-width="2"/></svg>
<div style="left:123.2px;top:191px;width:77px;height:10.2px;background:#000;border-radius:2px;"></div>
<div style="left:124.6px;top:192px;width:27.4px;height:8.2px;background:linear-gradient(#401e0a,#381a08);border-radius:1px;"></div>
<div style="left:151.5px;top:192px;width:1px;height:8.2px;background:#b85a20;"></div>
<div style="left:202.6px;top:191.8px;width:11.4px;height:8.6px;background:#505350;border-radius:1.5px;"></div>
<svg style="left:204.8px;top:193px;" width="7" height="7" viewBox="0 0 7 7"><path d="M0 0.700h7M0 3.100h7M0 5.500h7" stroke="#f0f0f0" stroke-width="1"/></svg>
<div style="left:216.4px;top:178.4px;width:6.6px;height:22.8px;background:#000;"></div>
<div style="left:226px;top:177.1px;width:14.6px;height:25.6px;background:#323532;"></div>
<div style="left:230.2px;top:187px;width:5.6px;height:5.6px;background:#4c4f4c;"></div>
<div style="left:105px;top:203.7px;width:120.4px;height:25.6px;background:#545754;"></div>
<div style="left:105px;top:203.7px;width:3.8px;height:25.6px;background:#6a8a1c;"></div>
<span class="t" style="left:112px;top:207px;font-size:7.13px;line-height:8px;color:#f0f0f0;transform:scaleX(0.951);">Polysynth</span>
<div style="left:173.4px;top:205.8px;width:11.6px;height:9.6px;background:#d01010;border-radius:2px;"></div>
<div style="left:176.6px;top:208px;width:5.2px;height:5.2px;background:#1a0000;border-radius:3px;"></div>
<div style="left:188px;top:205.8px;width:11.4px;height:9.6px;background:#6e716e;border-radius:2px;"></div>
<span class="t" style="left:191.12px;top:206px;font-size:7.48px;line-height:9px;color:#ffffff;transform:scaleX(1.035);font-weight:700;-webkit-text-stroke:0.1px;">S</span>
<div style="left:202.4px;top:205.8px;width:11.6px;height:9.6px;background:#6e716e;border-radius:2px;"></div>
<span class="t" style="left:204.88px;top:206px;font-size:7.48px;line-height:9px;color:#ffffff;transform:scaleX(1.035);font-weight:700;-webkit-text-stroke:0.1px;">M</span>
<svg style="left:112px;top:218.6px;" width="8" height="8" viewBox="0 0 8 8"><path d="M0.9 0.4v6.400M3.400 0.400v6.400M5.900 0.400v6.400" stroke="#d0d0d0" stroke-width="0.9"/><path d="M0.400 5.800h6.400" stroke="#d0d0d0" stroke-width="2"/></svg>
<div style="left:123.2px;top:217.6px;width:77px;height:10.2px;background:#000;border-radius:2px;"></div>
<div style="left:124.6px;top:218.6px;width:46.4px;height:8.2px;background:linear-gradient(#401e0a,#381a08);border-radius:1px;"></div>
<div style="left:170.5px;top:218.6px;width:1px;height:8.2px;background:#b85a20;"></div>
<svg style="left:125px;top:218.6px;" width="3" height="3" viewBox="0 0 3 3"><path d="M0 0h2.600L0 2.600z" fill="#e8e8e8"/></svg>
<div style="left:202.6px;top:218.4px;width:11.4px;height:8.6px;background:#6a6d6a;border-radius:1.5px;"></div>
<svg style="left:204.8px;top:219.6px;" width="7" height="7" viewBox="0 0 7 7"><path d="M0 0.700h7M0 3.100h7M0 5.500h7" stroke="#f0f0f0" stroke-width="1"/></svg>
<div style="left:216.4px;top:205px;width:6.6px;height:22.8px;background:#000;"></div>
<div style="left:217px;top:218.6px;width:2.4px;height:9px;background:#58a42c;"></div>
<div style="left:220px;top:218.6px;width:2.4px;height:9px;background:#58a42c;"></div>
<div style="left:226px;top:203.7px;width:14.6px;height:25.6px;background:#545754;"></div>
<div style="left:230.2px;top:213.6px;width:5.6px;height:5.6px;background:#c0c0c0;"></div>
<div style="left:105px;top:410.9px;width:120.4px;height:25.6px;background:#313431;"></div>
<div style="left:105px;top:410.9px;width:3.8px;height:25.6px;background:#5c5f5c;"></div>
<span class="t" style="left:112px;top:414px;font-size:7.13px;line-height:8px;color:#f0f0f0;transform:scaleX(0.903);">FX 1</span>
<div style="left:173.4px;top:413px;width:11.6px;height:9.6px;background:#505350;border-radius:2px;"></div>
<div style="left:176.6px;top:415.2px;width:5.2px;height:5.2px;background:#8c8f8c;border-radius:3px;"></div>
<div style="left:188px;top:413px;width:11.4px;height:9.6px;background:#595c59;border-radius:2px;"></div>
<span class="t" style="left:191.12px;top:413px;font-size:7.48px;line-height:9px;color:#ffffff;transform:scaleX(1.035);font-weight:700;-webkit-text-stroke:0.1px;">S</span>
<div style="left:202.4px;top:413px;width:11.6px;height:9.6px;background:#595c59;border-radius:2px;"></div>
<span class="t" style="left:204.88px;top:413px;font-size:7.48px;line-height:9px;color:#ffffff;transform:scaleX(1.035);font-weight:700;-webkit-text-stroke:0.1px;">M</span>
<svg style="left:112px;top:425.8px;" width="8" height="8" viewBox="0 0 8 8"><path d="M0.600 1.600h3.800v4.200M2.800 4.400l1.600 1.800l1.600-1.800" stroke="#a8aaa8" stroke-width="0.9" fill="none"/></svg>
<div style="left:123.2px;top:424.8px;width:77px;height:10.2px;background:#000;border-radius:2px;"></div>
<div style="left:124.6px;top:425.8px;width:58.4px;height:8.2px;background:linear-gradient(#401e0a,#381a08);border-radius:1px;"></div>
<div style="left:182.5px;top:425.8px;width:1px;height:8.2px;background:#b85a20;"></div>
<div style="left:202.6px;top:425.6px;width:11.4px;height:8.6px;background:#505350;border-radius:1.5px;"></div>
<svg style="left:204.8px;top:426.8px;" width="7" height="7" viewBox="0 0 7 7"><path d="M0 0.700h7M0 3.100h7M0 5.500h7" stroke="#f0f0f0" stroke-width="1"/></svg>
<div style="left:216.4px;top:412.2px;width:6.6px;height:22.8px;background:#000;"></div>
<div style="left:226px;top:410.9px;width:14.6px;height:25.6px;background:#2a2d2a;"></div>
<div style="left:230.2px;top:420.8px;width:5.6px;height:5.6px;background:#4c4f4c;"></div>
<div style="left:105px;top:437.5px;width:120.4px;height:25.6px;background:#313431;"></div>
<div style="left:105px;top:437.5px;width:3.8px;height:25.6px;background:#5c5f5c;"></div>
<span class="t" style="left:112px;top:441px;font-size:7.13px;line-height:8px;color:#f0f0f0;transform:scaleX(0.945);">Master</span>
<div style="left:173.4px;top:439.6px;width:11.6px;height:9.6px;background:#505350;border-radius:2px;"></div>
<div style="left:176.6px;top:441.8px;width:5.2px;height:5.2px;background:#8c8f8c;border-radius:3px;"></div>
<div style="left:188px;top:439.6px;width:11.4px;height:9.6px;background:#595c59;border-radius:2px;"></div>
<span class="t" style="left:191.12px;top:440px;font-size:7.48px;line-height:9px;color:#ffffff;transform:scaleX(1.035);font-weight:700;-webkit-text-stroke:0.1px;">S</span>
<div style="left:202.4px;top:439.6px;width:11.6px;height:9.6px;background:#595c59;border-radius:2px;"></div>
<span class="t" style="left:204.88px;top:440px;font-size:7.48px;line-height:9px;color:#ffffff;transform:scaleX(1.035);font-weight:700;-webkit-text-stroke:0.1px;">M</span>
<svg style="left:112px;top:452.4px;" width="8" height="8" viewBox="0 0 8 8"><path d="M0.400 6.800l0-5l2 2.200l1.600-3.400l1.600 3.400l2-2.200l0 5z" fill="#a4a6a4"/></svg>
<div style="left:123.2px;top:451.4px;width:77px;height:10.2px;background:#000;border-radius:2px;"></div>
<div style="left:124.6px;top:452.4px;width:58.4px;height:8.2px;background:linear-gradient(#401e0a,#381a08);border-radius:1px;"></div>
<div style="left:182.5px;top:452.4px;width:1px;height:8.2px;background:#b85a20;"></div>
<div style="left:202.6px;top:452.2px;width:11.4px;height:8.6px;background:#505350;border-radius:1.5px;"></div>
<svg style="left:204.8px;top:453.4px;" width="7" height="7" viewBox="0 0 7 7"><path d="M0 0.700h7M0 3.100h7M0 5.500h7" stroke="#f0f0f0" stroke-width="1"/></svg>
<div style="left:216.4px;top:438.8px;width:6.6px;height:22.8px;background:#000;"></div>
<div style="left:217px;top:443.4px;width:2.4px;height:18px;background:linear-gradient(#78a838,#4c9c2c 30%);"></div>
<div style="left:220px;top:443.4px;width:2.4px;height:18px;background:linear-gradient(#78a838,#4c9c2c 30%);"></div>
<div style="left:217px;top:442.4px;width:2.4px;height:1.2px;background:#c86428;"></div>
<div style="left:220px;top:442.4px;width:2.4px;height:1.2px;background:#c86428;"></div>
<div style="left:226px;top:437.5px;width:14.6px;height:25.6px;background:#2a2d2a;"></div>
<div style="left:230.2px;top:447.4px;width:5.6px;height:5.6px;background:#4c4f4c;"></div>
<span class="t" style="left:161.77px;top:232px;font-size:7.83px;line-height:9px;color:#8a8d8a;transform:scaleX(1.149);">+</span>
<div style="left:242px;top:70.7px;width:49.6px;height:25.6px;background:#3b3fd0;"></div>
<svg style="left:243.6px;top:72.8px;" width="6" height="7" viewBox="0 0 6 7"><path d="M0 0L5.200 3.100L0 6.200Z" fill="#1c1e8a"/></svg>
<div style="left:293.4px;top:70.7px;width:51.4px;height:25.6px;background:#3b3fd0;"></div>
<svg style="left:295px;top:72.8px;" width="6" height="7" viewBox="0 0 6 7"><path d="M0 0L5.200 3.100L0 6.200Z" fill="#1c1e8a"/></svg>
<div style="left:345.4px;top:70.7px;width:51.4px;height:25.6px;background:#0b0e0b;"></div>
<div style="left:348.2px;top:80.8px;width:5.2px;height:5px;background:#2c2f2c;"></div>
<div style="left:397.4px;top:70.7px;width:7px;height:25.6px;background:#0b0e0b;"></div>
<div style="left:400.2px;top:80.8px;width:5.2px;height:5px;background:#2c2f2c;"></div>
<div style="left:405px;top:70.7px;width:15.4px;height:25.6px;background:#3a3d3a;"></div>
<svg style="left:408.8px;top:79.4px;" width="9" height="9" viewBox="0 0 9 9"><path d="M0.200 1.200h7.200M0.200 3.800h7.200M0.200 6.400h4.400" stroke="#b8bab8" stroke-width="1.300"/><path d="M5.600 5.800l2 1.200l-2 1.200z" fill="#b8bab8"/></svg>
<div style="left:242px;top:97.3px;width:49.6px;height:25.6px;background:#c8924c;"></div>
<svg style="left:243.6px;top:99.4px;" width="6" height="7" viewBox="0 0 6 7"><path d="M0 0L5.200 3.100L0 6.200Z" fill="#8a5a20"/></svg>
<div style="left:293.4px;top:97.3px;width:51.4px;height:25.6px;background:#f8c47e;"></div>
<svg style="left:295px;top:99.4px;" width="6" height="7" viewBox="0 0 6 7"><path d="M0 0L5.200 3.100L0 6.200Z" fill="#8a5a20"/></svg>
<div style="left:345.4px;top:97.3px;width:51.4px;height:25.6px;background:#0b0e0b;"></div>
<div style="left:348.2px;top:107.4px;width:5.2px;height:5px;background:#2c2f2c;"></div>
<div style="left:397.4px;top:97.3px;width:7px;height:25.6px;background:#0b0e0b;"></div>
<div style="left:400.2px;top:107.4px;width:5.2px;height:5px;background:#2c2f2c;"></div>
<div style="left:405px;top:97.3px;width:15.4px;height:25.6px;background:#3a3d3a;"></div>
<svg style="left:408.8px;top:106px;" width="9" height="9" viewBox="0 0 9 9"><path d="M0.200 1.200h7.200M0.200 3.800h7.200M0.200 6.400h4.400" stroke="#b8bab8" stroke-width="1.300"/><path d="M5.600 5.800l2 1.200l-2 1.200z" fill="#b8bab8"/></svg>
<div style="left:242px;top:123.9px;width:49.6px;height:25.6px;background:#7276ec;"></div>
<svg style="left:243.6px;top:126px;" width="6" height="7" viewBox="0 0 6 7"><path d="M0 0L5.200 3.100L0 6.200Z" fill="#3c3eb0"/></svg>
<div style="left:293.4px;top:123.9px;width:51.4px;height:25.6px;background:#7276ec;"></div>
<svg style="left:295px;top:126px;" width="6" height="7" viewBox="0 0 6 7"><path d="M0 0L5.200 3.100L0 6.200Z" fill="#3c3eb0"/></svg>
<div style="left:345.4px;top:123.9px;width:51.4px;height:25.6px;background:#0b0e0b;"></div>
<div style="left:348.2px;top:134px;width:5.2px;height:5px;background:#2c2f2c;"></div>
<div style="left:397.4px;top:123.9px;width:7px;height:25.6px;background:#0b0e0b;"></div>
<div style="left:400.2px;top:134px;width:5.2px;height:5px;background:#2c2f2c;"></div>
<div style="left:405px;top:123.9px;width:15.4px;height:25.6px;background:#3a3d3a;"></div>
<svg style="left:408.8px;top:132.6px;" width="9" height="9" viewBox="0 0 9 9"><path d="M0.200 1.200h7.200M0.200 3.800h7.200M0.200 6.400h4.400" stroke="#b8bab8" stroke-width="1.300"/><path d="M5.600 5.800l2 1.200l-2 1.200z" fill="#b8bab8"/></svg>
<div style="left:242px;top:150.5px;width:49.6px;height:25.6px;background:#8a22d4;"></div>
<svg style="left:243.6px;top:152.6px;" width="6" height="7" viewBox="0 0 6 7"><path d="M0 0L5.200 3.100L0 6.200Z" fill="#5a0e98"/></svg>
<div style="left:293.4px;top:150.5px;width:51.4px;height:25.6px;background:#8a22d4;"></div>
<svg style="left:295px;top:152.6px;" width="6" height="7" viewBox="0 0 6 7"><path d="M0 0L5.200 3.100L0 6.200Z" fill="#5a0e98"/></svg>
<div style="left:345.4px;top:150.5px;width:51.4px;height:25.6px;background:#0b0e0b;"></div>
<div style="left:348.2px;top:160.6px;width:5.2px;height:5px;background:#2c2f2c;"></div>
<div style="left:397.4px;top:150.5px;width:7px;height:25.6px;background:#0b0e0b;"></div>
<div style="left:400.2px;top:160.6px;width:5.2px;height:5px;background:#2c2f2c;"></div>
<div style="left:405px;top:150.5px;width:15.4px;height:25.6px;background:#3a3d3a;"></div>
<svg style="left:408.8px;top:159.2px;" width="9" height="9" viewBox="0 0 9 9"><path d="M0.200 1.200h7.200M0.200 3.800h7.200M0.200 6.400h4.400" stroke="#b8bab8" stroke-width="1.300"/><path d="M5.600 5.800l2 1.200l-2 1.200z" fill="#b8bab8"/></svg>
<div style="left:242px;top:177.1px;width:49.6px;height:25.6px;background:#e8105c;"></div>
<svg style="left:243.6px;top:179.2px;" width="6" height="7" viewBox="0 0 6 7"><path d="M0 0L5.200 3.100L0 6.200Z" fill="#98083c"/></svg>
<div style="left:293.4px;top:177.1px;width:51.4px;height:25.6px;background:#e8105c;"></div>
<svg style="left:295px;top:179.2px;" width="6" height="7" viewBox="0 0 6 7"><path d="M0 0L5.200 3.100L0 6.200Z" fill="#98083c"/></svg>
<div style="left:345.4px;top:177.1px;width:51.4px;height:25.6px;background:#0b0e0b;"></div>
<div style="left:348.2px;top:187.2px;width:5.2px;height:5px;background:#2c2f2c;"></div>
<div style="left:397.4px;top:177.1px;width:7px;height:25.6px;background:#0b0e0b;"></div>
<div style="left:400.2px;top:187.2px;width:5.2px;height:5px;background:#2c2f2c;"></div>
<div style="left:405px;top:177.1px;width:15.4px;height:25.6px;background:#3a3d3a;"></div>
<svg style="left:408.8px;top:185.8px;" width="9" height="9" viewBox="0 0 9 9"><path d="M0.200 1.200h7.200M0.200 3.800h7.200M0.200 6.400h4.400" stroke="#b8bab8" stroke-width="1.300"/><path d="M5.600 5.800l2 1.200l-2 1.200z" fill="#b8bab8"/></svg>
<div style="left:242px;top:203.7px;width:49.6px;height:25.6px;background:#0b0e0b;"></div>
<svg style="left:244.2px;top:213.8px;clip-path:inset(0 0px 0 0);" width="6" height="6" viewBox="0 0 6 6"><circle cx="2.8" cy="2.8" r="2.6" fill="#b0b2b0"/></svg>
<div style="left:293.4px;top:203.7px;width:51.4px;height:25.6px;background:#0b0e0b;"></div>
<svg style="left:295.6px;top:213.8px;clip-path:inset(0 0px 0 0);" width="6" height="6" viewBox="0 0 6 6"><circle cx="2.8" cy="2.8" r="2.6" fill="#b0b2b0"/></svg>
<div style="left:345.4px;top:203.7px;width:51.4px;height:25.6px;background:#0b0e0b;"></div>
<svg style="left:347.6px;top:213.8px;clip-path:inset(0 0px 0 0);" width="6" height="6" viewBox="0 0 6 6"><circle cx="2.8" cy="2.8" r="2.6" fill="#b0b2b0"/></svg>
<div style="left:397.4px;top:203.7px;width:7px;height:25.6px;background:#0b0e0b;"></div>
<svg style="left:399.6px;top:213.8px;clip-path:inset(0 2px 0 0);" width="6" height="6" viewBox="0 0 6 6"><circle cx="2.8" cy="2.8" r="2.6" fill="#b0b2b0"/></svg>
<div style="left:405px;top:203.7px;width:15.4px;height:25.6px;background:#3a3d3a;"></div>
<svg style="left:408.8px;top:212.4px;" width="9" height="9" viewBox="0 0 9 9"><path d="M0.200 1.200h7.200M0.200 3.800h7.200M0.200 6.400h4.400" stroke="#555855" stroke-width="1.300"/><path d="M5.600 5.800l2 1.200l-2 1.200z" fill="#555855"/></svg>
<div style="left:242px;top:410.9px;width:49.6px;height:25.6px;background:#0e110e;"></div>
<div style="left:244.8px;top:421px;width:5.2px;height:5px;background:#2c2f2c;"></div>
<div style="left:293.4px;top:410.9px;width:51.4px;height:25.6px;background:#0e110e;"></div>
<div style="left:296.2px;top:421px;width:5.2px;height:5px;background:#2c2f2c;"></div>
<div style="left:345.4px;top:410.9px;width:51.4px;height:25.6px;background:#0e110e;"></div>
<div style="left:348.2px;top:421px;width:5.2px;height:5px;background:#2c2f2c;"></div>
<div style="left:397.4px;top:410.9px;width:7px;height:25.6px;background:#0e110e;"></div>
<div style="left:400.2px;top:421px;width:5.2px;height:5px;background:#2c2f2c;"></div>
<div style="left:405px;top:410.9px;width:15.4px;height:25.6px;background:#3a3d3a;"></div>
<svg style="left:408.8px;top:419.6px;" width="9" height="9" viewBox="0 0 9 9"><path d="M0.200 1.200h7.200M0.200 3.800h7.200M0.200 6.400h4.400" stroke="#b8bab8" stroke-width="1.300"/><path d="M5.600 5.800l2 1.200l-2 1.200z" fill="#b8bab8"/></svg>
<div style="left:242px;top:437.5px;width:49.6px;height:25.6px;background:#0e110e;"></div>
<div style="left:244.8px;top:447.6px;width:5.2px;height:5px;background:#2c2f2c;"></div>
<div style="left:293.4px;top:437.5px;width:51.4px;height:25.6px;background:#0e110e;"></div>
<div style="left:296.2px;top:447.6px;width:5.2px;height:5px;background:#2c2f2c;"></div>
<div style="left:345.4px;top:437.5px;width:51.4px;height:25.6px;background:#0e110e;"></div>
<div style="left:348.2px;top:447.6px;width:5.2px;height:5px;background:#2c2f2c;"></div>
<div style="left:397.4px;top:437.5px;width:7px;height:25.6px;background:#0e110e;"></div>
<div style="left:400.2px;top:447.6px;width:5.2px;height:5px;background:#2c2f2c;"></div>
<div style="left:405px;top:437.5px;width:15.4px;height:25.6px;background:#3a3d3a;"></div>
<svg style="left:408.8px;top:446.2px;" width="9" height="9" viewBox="0 0 9 9"><path d="M0.200 1.200h7.200M0.200 3.800h7.200M0.200 6.400h4.400" stroke="#b8bab8" stroke-width="1.300"/><path d="M5.600 5.800l2 1.200l-2 1.200z" fill="#b8bab8"/></svg>
<div style="left:254px;top:89.2px;width:3.6px;height:1px;background:#161850;"></div>
<div style="left:267px;top:89.2px;width:3.6px;height:1px;background:#161850;"></div>
<div style="left:279.6px;top:89.2px;width:3.6px;height:1px;background:#161850;"></div>
<div style="left:242.5px;top:89.2px;width:1.5px;height:1px;background:#161850;"></div>
<div style="left:293.5px;top:89.2px;width:3.4px;height:1px;background:#161850;"></div>
<div style="left:306px;top:89.2px;width:3.4px;height:1px;background:#161850;"></div>
<div style="left:319px;top:89.2px;width:3.4px;height:1px;background:#161850;"></div>
<div style="left:331.6px;top:89.2px;width:3.4px;height:1px;background:#161850;"></div>
<div style="left:254px;top:115.8px;width:3.4px;height:1px;background:#7a6a50;"></div>
<div style="left:279.6px;top:115.8px;width:3.4px;height:1px;background:#7a6a50;"></div>
<div style="left:302.4px;top:118.4px;width:3.4px;height:1px;background:#7a6a50;"></div>
<div style="left:312.4px;top:118.4px;width:3.4px;height:1px;background:#7a6a50;"></div>
<div style="left:341px;top:109.8px;width:4px;height:1px;background:#9a8060;"></div>
<div style="left:293.4px;top:120px;width:51.4px;height:1px;background:#8a6a38;"></div>
<div style="left:306px;top:121.8px;width:3.4px;height:0.8px;background:#8a7a60;"></div>
<div style="left:331.6px;top:121.8px;width:3.4px;height:0.8px;background:#8a7a60;"></div>
<div style="left:242px;top:138.6px;width:11px;height:0.9px;background:#3a3c90;"></div>
<div style="left:253px;top:140.8px;width:14px;height:0.9px;background:#4a4a70;"></div>
<div style="left:267px;top:143px;width:13px;height:0.9px;background:#4a4a70;"></div>
<div style="left:280px;top:145.2px;width:12px;height:0.9px;background:#3a3c90;"></div>
<div style="left:293.4px;top:138.6px;width:11px;height:0.9px;background:#3a3c90;"></div>
<div style="left:304.4px;top:140.8px;width:14px;height:0.9px;background:#4a4a70;"></div>
<div style="left:318.4px;top:143px;width:13px;height:0.9px;background:#4a4a70;"></div>
<div style="left:331.4px;top:145.2px;width:12px;height:0.9px;background:#3a3c90;"></div>
<div style="left:242px;top:164.4px;width:49.6px;height:1px;background:#7018b8;"></div>
<div style="left:242px;top:169.2px;width:49.6px;height:1.4px;background:#6a14b0;"></div>
<div style="left:242px;top:172.4px;width:49.6px;height:1.4px;background:#5c10a0;"></div>
<div style="left:242px;top:174.6px;width:49.6px;height:1.4px;background:#5c10a0;"></div>
<div style="left:293.4px;top:164.4px;width:51.4px;height:1px;background:#7018b8;"></div>
<div style="left:293.4px;top:169.2px;width:51.4px;height:1.4px;background:#6a14b0;"></div>
<div style="left:293.4px;top:172.4px;width:51.4px;height:1.4px;background:#5c10a0;"></div>
<div style="left:293.4px;top:174.6px;width:51.4px;height:1.4px;background:#5c10a0;"></div>
<div style="left:242px;top:191.4px;width:12px;height:1px;background:#98103c;"></div>
<div style="left:242px;top:194.2px;width:12px;height:1px;background:#98103c;"></div>
<div style="left:242px;top:197px;width:12px;height:1px;background:#98103c;"></div>
<div style="left:254px;top:192.6px;width:13px;height:1px;background:#98103c;"></div>
<div style="left:254px;top:195.4px;width:13px;height:1px;background:#98103c;"></div>
<div style="left:254px;top:198.2px;width:13px;height:1px;background:#98103c;"></div>
<div style="left:267px;top:193.8px;width:13px;height:1px;background:#98103c;"></div>
<div style="left:267px;top:196.6px;width:13px;height:1px;background:#98103c;"></div>
<div style="left:267px;top:199.4px;width:13px;height:1px;background:#98103c;"></div>
<div style="left:280px;top:195px;width:11.6px;height:1px;background:#98103c;"></div>
<div style="left:280px;top:197.8px;width:11.6px;height:1px;background:#98103c;"></div>
<div style="left:280px;top:200.6px;width:11.6px;height:1px;background:#98103c;"></div>
<div style="left:293.4px;top:191.4px;width:12px;height:1px;background:#98103c;"></div>
<div style="left:293.4px;top:194.2px;width:12px;height:1px;background:#98103c;"></div>
<div style="left:293.4px;top:197px;width:12px;height:1px;background:#98103c;"></div>
<div style="left:305.4px;top:192.6px;width:13px;height:1px;background:#98103c;"></div>
<div style="left:305.4px;top:195.4px;width:13px;height:1px;background:#98103c;"></div>
<div style="left:305.4px;top:198.2px;width:13px;height:1px;background:#98103c;"></div>
<div style="left:318.4px;top:193.8px;width:13px;height:1px;background:#98103c;"></div>
<div style="left:318.4px;top:196.6px;width:13px;height:1px;background:#98103c;"></div>
<div style="left:318.4px;top:199.4px;width:13px;height:1px;background:#98103c;"></div>
<div style="left:331.4px;top:195px;width:13.4px;height:1px;background:#98103c;"></div>
<div style="left:331.4px;top:197.8px;width:13.4px;height:1px;background:#98103c;"></div>
<div style="left:331.4px;top:200.6px;width:13.4px;height:1px;background:#98103c;"></div>
<div style="left:240.7px;top:70.4px;width:2.1px;height:392.4px;background:#a80c12;"></div>
<div style="left:290.7px;top:70.4px;width:2.1px;height:392.4px;background:#a80c12;"></div>
<div style="left:240.4px;top:70.4px;width:52.4px;height:1.6px;background:#a80c12;"></div>
<div style="left:240.7px;top:461px;width:52.1px;height:2px;background:#a80c12;border-radius:1.5px;"></div>
<div style="left:104.6px;top:463.2px;width:916px;height:14.6px;background:#1c1f1c;"></div>
<div style="left:117px;top:465.2px;width:7.6px;height:10.4px;background:#080a08;border-radius:1px;"></div>
<div style="left:130px;top:465.2px;width:7.6px;height:10.4px;background:#080a08;border-radius:1px;"></div>
<div style="left:143px;top:465.2px;width:7.6px;height:10.4px;background:#080a08;border-radius:1px;"></div>
<svg style="left:108px;top:466px;" width="44" height="9" viewBox="0 0 44 9"><path d="M1.800 2.600l1.400-1.400l1.400 1.400M3.200 1.400v3M5.600 6.400l-1.400 1.400l-1.400-1.400" stroke="#a8aaa8" stroke-width="0.800" fill="none" transform="translate(0,0.400)"/><g fill="#e8581c"><rect x="12.400" y="2.400" width="2.600" height="1.800"/><rect x="15.600" y="2.400" width="2.600" height="1.800"/><rect x="12.400" y="4.800" width="2.600" height="1.800"/><rect x="15.600" y="4.800" width="2.600" height="1.800"/></g><path d="M24.200 2.600h3v4M25.600 5.200l1.600 1.800l1.600-1.800" stroke="#e8581c" stroke-width="1" fill="none"/><path d="M36.400 2.400l4 4.200M40.400 2.400l-4 4.200" stroke="#e02818" stroke-width="1.300" fill="none"/></svg>
<svg style="left:226.5px;top:468.1px;" width="6" height="6" viewBox="0 0 6 6"><path d="M4.600 0.400v5L0.600 2.900z" fill="#b0b3b0"/></svg>
<div style="left:236.4px;top:468.4px;width:46.4px;height:5.6px;background:#6a6d6a;border-radius:2.8px;"></div>
<svg style="left:413px;top:468.1px;" width="6" height="6" viewBox="0 0 6 6"><path d="M0.800 0.400v5L4.800 2.900z" fill="#b0b3b0"/></svg>
<svg style="left:426.4px;top:468.1px;" width="6" height="6" viewBox="0 0 6 6"><path d="M4.600 0.400v5L0.600 2.900z" fill="#b0b3b0"/></svg>
<div style="left:849.4px;top:468.4px;width:64.6px;height:5.6px;background:#6a6d6a;border-radius:2.8px;"></div>
<svg style="left:917.6px;top:468.1px;" width="6" height="6" viewBox="0 0 6 6"><path d="M0.800 0.400v5L4.800 2.900z" fill="#b0b3b0"/></svg>
<div style="left:928px;top:465px;width:12px;height:10.8px;background:#0a0a0a;border-radius:1px;"></div>
<svg style="left:929.4px;top:466.2px;" width="9" height="9" viewBox="0 0 9 9"><g fill="none" stroke="#d8501c" stroke-width="0.9"><circle cx="2" cy="6" r="1.300"/><circle cx="6.600" cy="6" r="1.300"/><path d="M1 3.400h5.600M6.400 1.400l-3.400 2"/></g></svg>
<span class="t" style="left:972px;top:467px;font-size:7.31px;line-height:9px;color:#dcdcdc;transform:scaleX(1.026);">1/16</span>
<svg style="left:989.6px;top:469.4px;" width="4" height="3" viewBox="0 0 4 3"><path d="M0 2.400h3l-1.500-2z" fill="#c8c8c8"/></svg>
<div style="left:996.4px;top:465px;width:11.6px;height:10.8px;background:#0a0a0a;border-radius:1px;"></div>
<svg style="left:997.4px;top:466.4px;" width="10" height="8" viewBox="0 0 10 8"><path d="M4.600 0.600v6.800" stroke="#d8501c" stroke-width="0.700"/><path d="M0.800 2.600l2.400 1.400l-2.400 1.400zM8.400 2.600l-2.400 1.400l2.400 1.400z" fill="#d8501c"/></svg>
<div style="left:1010.4px;top:465px;width:8.6px;height:10.8px;background:#0a0a0a;border-radius:1px;"></div>
<svg style="left:1011.4px;top:466.4px;" width="7" height="8" viewBox="0 0 7 8"><path d="M3.600 2v5.400" stroke="#c8341c" stroke-width="0.900"/><path d="M2.200 2.200h3" stroke="#d8441c" stroke-width="1.400"/></svg>
</section>
<section id="browser">
<div style="left:1024px;top:45.9px;width:133.4px;height:583.1px;background:#000;border-radius:2px;border:1px solid #2c2f2c;box-sizing:border-box;"></div>
<div style="left:1025px;top:46.9px;width:131.4px;height:26.7px;background:#171a17;"></div>
<span class="t" style="left:1029px;top:50px;font-size:7.13px;line-height:8px;color:#e4e4e4;transform:scaleX(0.934);">Browser - Devices</span>
<div style="left:1028.6px;top:61.4px;width:10.6px;height:10px;background:#0c0c0c;border-radius:1.5px;"></div>
<div style="left:1029.6px;top:62.4px;width:8.4px;height:7.8px;background:#0a0a0a;border-radius:1.8px;border:1.2px solid #e8602c;box-sizing:border-box;"></div>
<svg style="left:1047px;top:61px;" width="10" height="10" viewBox="0 0 10 10"><circle cx="5" cy="5" r="4.200" fill="none" stroke="#e0e0e0" stroke-width="0.900"/><ellipse cx="5" cy="5" rx="2.400" ry="1.500" fill="#e0e0e0"/><circle cx="5" cy="5" r="0.700" fill="#222"/></svg>
<svg style="left:1066.6px;top:61px;" width="10" height="10" viewBox="0 0 10 10"><path d="M1.200 1.600l2.200 2.600l5.400 0.800l-5.400 0.800l-2.200 2.600z" fill="#e0e0e0"/></svg>
<svg style="left:1085.8px;top:62px;" width="9" height="8" viewBox="0 0 9 8"><rect x="0.200" y="0.400" width="7.400" height="6.400" fill="#e0e0e0"/><path d="M2.400 0.400v4M5.200 0.400v4" stroke="#171a17" stroke-width="1"/><path d="M2.700 4.400v2.400M5.100 4.400v2.400" stroke="#171a17" stroke-width="0.400"/></svg>
<svg style="left:1104.6px;top:61px;" width="10" height="10" viewBox="0 0 10 10"><circle cx="4.600" cy="5" r="4.200" fill="#e0e0e0"/><circle cx="4.600" cy="4.200" r="1.200" fill="#444"/><path d="M3.200 7.600a1.400 1.400 0 0 1 2.800 0" fill="#444"/></svg>
<svg style="left:1124px;top:62px;" width="9" height="8" viewBox="0 0 9 8"><rect x="0.200" y="0.400" width="8.400" height="6.600" fill="#e0e0e0"/><rect x="0.800" y="2.200" width="7.200" height="0.600" fill="#555"/></svg>
<svg style="left:1143.6px;top:62px;" width="9" height="8" viewBox="0 0 9 8"><rect x="0.200" y="0.200" width="8.400" height="5.600" rx="0.600" fill="#e0e0e0"/><rect x="3.200" y="6.200" width="2.400" height="1" fill="#e0e0e0"/></svg>
<div style="left:1025.4px;top:74.2px;width:130.8px;height:12.4px;background:#000;"></div>
<svg style="left:1028.8px;top:76.2px;" width="10" height="9" viewBox="0 0 10 9"><circle cx="3" cy="3.200" r="2.300" fill="none" stroke="#f0f0f0" stroke-width="1.100"/><path d="M4.600 5l1.800 1.800" stroke="#f0f0f0" stroke-width="1.200"/><path d="M6.600 4.400h2.600l-1.300 1.600z" fill="#f0f0f0"/></svg>
<span class="t" style="left:1040px;top:76px;font-size:7.31px;line-height:9px;color:#e8e8e8;transform:scaleX(0.943);">pol</span>
<svg style="left:1144.4px;top:78px;" width="6" height="6" viewBox="0 0 6 6"><path d="M0.600 0.600l4.200 4.200M4.800 0.600l-4.200 4.200" stroke="#e8e8e8" stroke-width="1"/></svg>
<div style="left:1025.6px;top:89px;width:130.6px;height:11.4px;background:#363936;"></div>
<div style="left:1029.4px;top:92.8px;width:4.6px;height:3.4px;background:#a8aaa8;"></div>
<span class="t" style="left:1037.8px;top:91px;font-size:7.13px;line-height:8px;color:#e8e8e8;transform:scaleX(0.933);">Collection</span>
<div style="left:1025.6px;top:101.2px;width:130.6px;height:11.4px;background:#252825;"></div>
<div style="left:1029.4px;top:105px;width:4.6px;height:3.4px;background:#a8aaa8;"></div>
<span class="t" style="left:1037.8px;top:104px;font-size:7.13px;line-height:8px;color:#e8e8e8;transform:scaleX(0.942);">Location</span>
<div style="left:1025.6px;top:114.4px;width:130.6px;height:12.2px;background:#0b1c27;"></div>
<svg style="left:1029.2px;top:116.6px;" width="8" height="8" viewBox="0 0 8 8"><circle cx="3.800" cy="3.900" r="3" fill="none" stroke="#d8dad8" stroke-width="1"/></svg>
<span class="t" style="left:1040.4px;top:117px;font-size:7.13px;line-height:8px;color:#e8e8e8;transform:scaleX(0.928);">All Device Locations</span>
<span class="t" style="left:1145.26px;top:117px;font-size:6.44px;line-height:7px;color:#70807c;transform:scaleX(0.988);">7</span>
<svg style="left:1037px;top:128px;" width="10" height="10" viewBox="0 0 10 10"><circle cx="4.800" cy="4.800" r="4.500" fill="#d81828"/><path d="M2.400 5.600l1.200-1.400l1.200 1l1.200-1.400l1.200 1.600" stroke="#f8c0c0" stroke-width="0.800" fill="none"/></svg>
<span class="t" style="left:1050.2px;top:129px;font-size:7.13px;line-height:8px;color:#e0e0e0;transform:scaleX(1.009);">Bitwig</span>
<span class="t" style="left:1145.26px;top:129px;font-size:6.44px;line-height:7px;color:#343834;transform:scaleX(0.988);">3</span>
<svg style="left:1037.4px;top:140.5px;" width="10" height="9" viewBox="0 0 10 9"><rect x="0.200" y="0.400" width="9.400" height="7.600" rx="0.800" fill="#8aa86a"/><rect x="0.200" y="0.400" width="9.400" height="1.600" fill="#a8c488"/><rect x="6.600" y="0.600" width="3" height="7.200" fill="#c8d8a8"/><circle cx="3.600" cy="4.400" r="1.500" fill="#b02010"/></svg>
<span class="t" style="left:1049.6px;top:141px;font-size:7.13px;line-height:8px;color:#e0e0e0;transform:scaleX(0.896);">System VST 3 Plug-ins</span>
<svg style="left:1028.8px;top:143.5px;" width="4" height="4" viewBox="0 0 4 4"><path d="M0.200 0.400h3.400l-1.700 2.800z" fill="#b8bab8"/></svg>
<span class="t" style="left:1145.26px;top:141px;font-size:6.44px;line-height:7px;color:#343834;transform:scaleX(0.988);">4</span>
<svg style="left:1043.4px;top:152.4px;" width="10" height="9" viewBox="0 0 10 9"><path d="M0.300 1.400h3.400l0.800 1h4.800v6h-9z" fill="#c8cac4"/><path d="M0.300 3h9v5.400h-9z" fill="#dcdcd8"/></svg>
<span class="t" style="left:1055.6px;top:154px;font-size:7.13px;line-height:8px;color:#e0e0e0;transform:scaleX(0.914);">Audionity</span>
<span class="t" style="left:1145.26px;top:153px;font-size:6.44px;line-height:7px;color:#343834;transform:scaleX(0.988);">1</span>
<svg style="left:1037.4px;top:164.7px;" width="10" height="9" viewBox="0 0 10 9"><rect x="0.200" y="0.400" width="9.400" height="7.600" rx="0.800" fill="#8aa86a"/><rect x="0.200" y="0.400" width="9.400" height="1.600" fill="#a8c488"/><rect x="6.600" y="0.600" width="3" height="7.200" fill="#c8d8a8"/><circle cx="3.600" cy="4.400" r="1.500" fill="#b02010"/></svg>
<span class="t" style="left:1049.6px;top:166px;font-size:7.13px;line-height:8px;color:#e0e0e0;transform:scaleX(0.917);">My VST 3 Plug-ins</span>
<span class="t" style="left:1145.26px;top:165px;font-size:6.44px;line-height:7px;color:#2a2d2a;transform:scaleX(0.988);">0</span>
<svg style="left:1037.4px;top:176.8px;" width="10" height="9" viewBox="0 0 10 9"><rect x="0.200" y="0.400" width="9.400" height="7.600" rx="0.800" fill="#8aa86a"/><rect x="0.200" y="0.400" width="9.400" height="1.600" fill="#a8c488"/><rect x="6.600" y="0.600" width="3" height="7.200" fill="#c8d8a8"/><circle cx="3.600" cy="4.400" r="1.500" fill="#b02010"/></svg>
<span class="t" style="left:1049.6px;top:178px;font-size:7.13px;line-height:8px;color:#e0e0e0;transform:scaleX(0.837);">VST</span>
<span class="t" style="left:1145.26px;top:178px;font-size:6.44px;line-height:7px;color:#2a2d2a;transform:scaleX(0.988);">0</span>
<svg style="left:1037.4px;top:188.9px;" width="10" height="9" viewBox="0 0 10 9"><rect x="0.200" y="0.400" width="9.400" height="7.600" rx="0.800" fill="#8aa86a"/><rect x="0.200" y="0.400" width="9.400" height="1.600" fill="#a8c488"/><rect x="6.600" y="0.600" width="3" height="7.200" fill="#c8d8a8"/><circle cx="3.600" cy="4.400" r="1.500" fill="#b02010"/></svg>
<span class="t" style="left:1049.6px;top:190px;font-size:7.13px;line-height:8px;color:#e0e0e0;transform:scaleX(0.895);">System CLAP Plug-ins</span>
<span class="t" style="left:1145.26px;top:190px;font-size:6.44px;line-height:7px;color:#2a2d2a;transform:scaleX(0.988);">0</span>
<svg style="left:1037.4px;top:201px;" width="10" height="9" viewBox="0 0 10 9"><rect x="0.200" y="0.400" width="9.400" height="7.600" rx="0.800" fill="#8aa86a"/><rect x="0.200" y="0.400" width="9.400" height="1.600" fill="#a8c488"/><rect x="6.600" y="0.600" width="3" height="7.200" fill="#c8d8a8"/><circle cx="3.600" cy="4.400" r="1.500" fill="#b02010"/></svg>
<span class="t" style="left:1049.6px;top:202px;font-size:7.13px;line-height:8px;color:#e0e0e0;transform:scaleX(0.955);">HoRNetDoIn</span>
<span class="t" style="left:1145.26px;top:202px;font-size:6.44px;line-height:7px;color:#2a2d2a;transform:scaleX(0.988);">0</span>
<div style="left:1025.6px;top:292px;width:130.6px;height:11.2px;background:#363936;"></div>
<div style="left:1029.4px;top:295.8px;width:4.6px;height:3.4px;background:#a8aaa8;"></div>
<span class="t" style="left:1037.8px;top:294px;font-size:7.13px;line-height:8px;color:#e8e8e8;transform:scaleX(0.912);">Category</span>
<svg style="left:1028px;top:307.6px;" width="10" height="10" viewBox="0 0 10 10"><rect x="0.300" y="0.400" width="9.600" height="9.200" rx="1.200" fill="#d8a02c"/><rect x="1.400" y="2.600" width="7.400" height="4.800" fill="#2a2410"/><path d="M1.400 5h7.400M5.800 2.600v4.800" stroke="#d8b868" stroke-width="0.700"/></svg>
<span class="t" style="left:1040.7px;top:309px;font-size:7.13px;line-height:8px;color:#e4e4e4;transform:scaleX(0.900);">Poly Grid</span>
<span class="t" style="left:1141.78px;top:309px;font-size:6.09px;line-height:7px;color:#181a16;transform:scaleX(1.149);font-family:'DejaVu Sans',sans-serif;">★</span>
<svg style="left:1028px;top:319.74px;" width="10" height="10" viewBox="0 0 10 10"><rect x="0.300" y="0.400" width="9.600" height="9.200" rx="0.800" fill="#b0261a"/><path d="M0.600 1.200h8.800l-3.200 3.400v2.600l-2.200-0.800v-1.800z" fill="#dc5440"/><rect x="0.400" y="7" width="9.200" height="2.400" fill="#2a1a18"/><rect x="6.600" y="7.400" width="3" height="1.600" fill="#d8d0c8"/></svg>
<span class="t" style="left:1040.7px;top:321px;font-size:7.13px;line-height:8px;color:#e4e4e4;transform:scaleX(0.906);">PolyComp</span>
<span class="t" style="left:1141.78px;top:321px;font-size:6.09px;line-height:7px;color:#181a16;transform:scaleX(1.149);font-family:'DejaVu Sans',sans-serif;">★</span>
<svg style="left:1028px;top:331.88px;" width="10" height="10" viewBox="0 0 10 10"><rect x="0.300" y="0.400" width="9.600" height="9.200" rx="1.200" fill="#e0a62c"/><rect x="1.200" y="2.200" width="4.600" height="1.800" fill="#2a2008"/><rect x="1.200" y="5.400" width="6.400" height="2" fill="#2a2008"/></svg>
<span class="t" style="left:1040.7px;top:333px;font-size:7.13px;line-height:8px;color:#e4e4e4;transform:scaleX(0.925);">Polymer</span>
<span class="t" style="left:1141.78px;top:333px;font-size:6.09px;line-height:7px;color:#181a16;transform:scaleX(1.149);font-family:'DejaVu Sans',sans-serif;">★</span>
<div style="left:1025.6px;top:343.02px;width:130.6px;height:12px;background:#0a1e2a;"></div>
<svg style="left:1028px;top:344.02px;" width="10" height="10" viewBox="0 0 10 10"><rect x="0.300" y="0.400" width="9.600" height="9.200" rx="1.200" fill="#e0a62c"/><rect x="1.200" y="2.200" width="4.600" height="1.800" fill="#2a2008"/><rect x="1.200" y="5.400" width="6.400" height="2" fill="#2a2008"/></svg>
<span class="t" style="left:1040.7px;top:346px;font-size:7.13px;line-height:8px;color:#f0f0f0;transform:scaleX(0.919);">Polysynth</span>
<span class="t" style="left:1141.78px;top:346px;font-size:6.09px;line-height:7px;color:#6e6026;transform:scaleX(1.149);font-family:'DejaVu Sans',sans-serif;">★</span>
<svg style="left:1028px;top:356.16px;" width="10" height="10" viewBox="0 0 10 10"><rect x="0.300" y="0.400" width="9.600" height="9.200" rx="0.800" fill="#b0261a"/><path d="M0.600 1.200h8.800l-3.200 3.400v2.600l-2.200-0.800v-1.800z" fill="#dc5440"/><rect x="0.400" y="7" width="9.200" height="2.400" fill="#2a1a18"/><rect x="6.600" y="7.400" width="3" height="1.600" fill="#d8d0c8"/></svg>
<span class="t" style="left:1040.7px;top:358px;font-size:7.13px;line-height:8px;color:#e4e4e4;transform:scaleX(0.915);">denise - poltergate ( X64 )</span>
<span class="t" style="left:1141.78px;top:358px;font-size:6.09px;line-height:7px;color:#181a16;transform:scaleX(1.149);font-family:'DejaVu Sans',sans-serif;">★</span>
<svg style="left:1028px;top:368.3px;" width="10" height="10" viewBox="0 0 10 10"><rect x="0.300" y="0.400" width="9.600" height="9.200" rx="0.800" fill="#b0261a"/><path d="M0.600 1.200h8.800l-3.200 3.400v2.600l-2.200-0.800v-1.800z" fill="#dc5440"/><rect x="0.400" y="7" width="9.200" height="2.400" fill="#2a1a18"/><rect x="6.600" y="7.400" width="3" height="1.600" fill="#d8d0c8"/></svg>
<span class="t" style="left:1040.7px;top:370px;font-size:7.13px;line-height:8px;color:#e4e4e4;transform:scaleX(0.907);">Gatekeeper</span>
<span class="t" style="left:1141.78px;top:370px;font-size:6.09px;line-height:7px;color:#181a16;transform:scaleX(1.149);font-family:'DejaVu Sans',sans-serif;">★</span>
<svg style="left:1028px;top:380.44px;" width="10" height="10" viewBox="0 0 10 10"><rect x="0.300" y="0.400" width="9.600" height="9.200" rx="0.800" fill="#b0261a"/><path d="M0.600 1.200h8.800l-3.200 3.400v2.600l-2.200-0.800v-1.800z" fill="#dc5440"/><rect x="0.400" y="7" width="9.200" height="2.400" fill="#2a1a18"/><rect x="6.600" y="7.400" width="3" height="1.600" fill="#d8d0c8"/></svg>
<span class="t" style="left:1040.7px;top:382px;font-size:7.13px;line-height:8px;color:#e4e4e4;transform:scaleX(0.956);">Wider</span>
<span class="t" style="left:1141.78px;top:382px;font-size:6.09px;line-height:7px;color:#181a16;transform:scaleX(1.149);font-family:'DejaVu Sans',sans-serif;">★</span>
<div style="left:1025px;top:586px;width:131.4px;height:1px;background:#262926;"></div>
<span class="t" style="left:1029px;top:591px;font-size:7.13px;line-height:8px;color:#ececec;transform:scaleX(0.938);">Polysynth</span>
<span class="t" style="left:1029px;top:600px;font-size:6.96px;line-height:7px;color:#dcdcdc;transform:scaleX(0.959);">Two-oscillator subtractive synthesizer</span>
<div style="left:1029px;top:608.8px;width:124px;height:0.6px;background:#141614;"></div>
<span class="t" style="left:1029px;top:611px;font-size:6.96px;line-height:7px;color:#dcdcdc;transform:scaleX(0.964);">Creator: Bitwig</span>
<span class="t" style="left:1079.2px;top:611px;font-size:6.96px;line-height:7px;color:#dcdcdc;transform:scaleX(0.942);">Category: Synth</span>
<span class="t" style="left:1029px;top:620px;font-size:6.96px;line-height:7px;color:#dcdcdc;transform:scaleX(0.966);">Device type: Instrument</span>
</section>
<section id="dev">
<div style="left:101.4px;top:480.4px;width:920.4px;height:148.4px;background:#000;border-radius:2px;border:1px solid #343734;box-sizing:border-box;"></div>
<div style="left:103.6px;top:482px;width:3.6px;height:145.6px;background:#5c8c2c;"></div>
<span class="t" style="left:95.41px;top:551.71px;font-size:6.44px;line-height:7px;color:#f0f0f0;transform-origin:50% 3.69px;transform:rotate(-90deg) scaleX(1.006);font-weight:700;-webkit-text-stroke:0.1px;transform-origin:50% 50%;">POLYSYNTH</span>
<div style="left:126.2px;top:494px;width:6.2px;height:6px;background:#e8c020;"></div>
<span class="t" style="left:126.28px;top:551px;font-size:8.7px;line-height:10px;color:#5a5d5a;transform:scaleX(1.149);">+</span>
<div style="left:135.6px;top:489.4px;width:450.4px;height:131.6px;background:#1c1f1c;border-radius:3px;border:1px solid #2e312e;box-sizing:border-box;"></div>
<div style="left:136.4px;top:490.2px;width:15.2px;height:130px;background:#151815;border-radius:2px;"></div>
<svg style="left:139px;top:492.6px;" width="9" height="10" viewBox="0 0 9 10"><path d="M2.700 3.200a2.700 2.700 0 1 0 3.400 0" fill="none" stroke="#d83c1c" stroke-width="1"/><path d="M4.400 1.600v3.200" stroke="#d83c1c" stroke-width="1"/></svg>
<svg style="left:139.6px;top:506.4px;" width="8" height="7" viewBox="0 0 8 7"><path d="M0.300 0.800h2.800l0.600 0.800h3.800v4.800h-7.200z" fill="#8a8d8a"/></svg>
<span class="t" style="left:124.56px;top:552.04px;font-size:6.26px;line-height:7px;color:#f0f0f0;transform-origin:50% 3.76px;transform:rotate(-90deg) scaleX(0.992);font-weight:700;-webkit-text-stroke:0.1px;">POLYSYNTH</span>
<div style="left:139.4px;top:591px;width:8.6px;height:6.6px;background:transparent;border-radius:1.6px;border:1px solid #b8bab8;border-top-width:1.6px;box-sizing:border-box;"></div>
<svg style="left:140px;top:602.8px;" width="8" height="4" viewBox="0 0 8 4"><rect x="0" y="0" width="1.400" height="1.200" fill="#8a8d8a"/><rect x="0" y="2.2" width="1.400" height="1.200" fill="#8a8d8a"/><rect x="2.6" y="0" width="1.400" height="1.200" fill="#8a8d8a"/><rect x="2.6" y="2.2" width="1.400" height="1.200" fill="#8a8d8a"/><rect x="5.2" y="0" width="1.400" height="1.200" fill="#8a8d8a"/><rect x="5.2" y="2.2" width="1.400" height="1.200" fill="#8a8d8a"/></svg>
<svg style="left:139.6px;top:613px;" width="9" height="4" viewBox="0 0 9 4"><circle cx="1.600" cy="2" r="1.300" fill="#e83c1c"/><path d="M3 2h3" stroke="#e8681c" stroke-width="0.900"/><path d="M5 0.600l2.400 1.400l-2.400 1.400z" fill="#e8681c"/></svg>
<div style="left:153.7px;top:491px;width:41px;height:41.4px;background:#0b0e0b;border-radius:2px;"></div>
<svg style="left:0px;top:0px;" width="1160" height="653" viewBox="0 0 1160 653"><path d="M156.400 507.400h36.200" stroke="#3a3d3a" stroke-width="0.900"/><path d="M156.4 507.4L156.76 506.62L157.12 505.85L157.49 505.08L157.85 504.32L158.21 503.57L158.57 502.84L158.93 502.12L159.3 501.43L159.66 500.76L160.02 500.11L160.38 499.5L160.74 498.91L161.11 498.36L161.47 497.85L161.83 497.37L162.19 496.93L162.55 496.53L162.92 496.18L163.28 495.87L163.64 495.61L164 495.39L164.36 495.22L164.73 495.1L165.09 495.02L165.45 495L165.81 495.02L166.17 495.1L166.54 495.22L166.9 495.39L167.26 495.61L167.62 495.87L167.98 496.18L168.35 496.53L168.71 496.93L169.07 497.37L169.43 497.85L169.79 498.36L170.16 498.91L170.52 499.5L170.88 500.11L171.24 500.76L171.6 501.43L171.97 502.12L172.33 502.84L172.69 503.57L173.05 504.32L173.41 505.08L173.78 505.85L174.14 506.62L174.5 507.4L174.86 508.18L175.22 508.95L175.59 509.72L175.95 510.48L176.31 511.23L176.67 511.96L177.03 512.68L177.4 513.37L177.76 514.04L178.12 514.69L178.48 515.3L178.84 515.89L179.21 516.44L179.57 516.95L179.93 517.43L180.29 517.87L180.65 518.27L181.02 518.62L181.38 518.93L181.74 519.19L182.1 519.41L182.46 519.58L182.83 519.7L183.19 519.78L183.55 519.8L183.91 519.78L184.27 519.7L184.64 519.58L185 519.41L185.36 519.19L185.72 518.93L186.08 518.62L186.45 518.27L186.81 517.87L187.17 517.43L187.53 516.95L187.89 516.44L188.26 515.89L188.62 515.3L188.98 514.69L189.34 514.04L189.7 513.37L190.07 512.68L190.43 511.96L190.79 511.23L191.15 510.48L191.51 509.72L191.88 508.95L192.24 508.18L192.6 507.4" fill="none" stroke="#b8242c" stroke-width="0.900"/><circle cx="169.600" cy="507.400" r="1.500" fill="#f0f0f0"/><circle cx="171.400" cy="527.800" r="1.900" fill="#28a8e8"/><path d="M171.400 527.800h6.400" stroke="#28a8e8" stroke-width="0.900"/><path d="M177 526l2.800 1.800l-2.800 1.800z" fill="#28a8e8"/></svg>
<span class="t" style="left:182.2px;top:493px;font-size:6.09px;line-height:7px;color:#b8bab8;transform:scaleX(0.998);">MW</span>
<div style="left:153.7px;top:534.7px;width:41px;height:41.4px;background:#0b0e0b;border-radius:2px;"></div>
<span class="t" style="left:157.3px;top:537px;font-size:6.96px;line-height:7px;color:#c8cac8;transform:scaleX(0.913);">Expressions</span>
<span class="t" style="left:160.4px;top:547px;font-size:6.44px;line-height:7px;color:#3cf090;transform:scaleX(0.789);-webkit-text-stroke:0.25px;">VEL</span>
<svg style="left:160.8px;top:554.6px;" width="11" height="5" viewBox="0 0 11 5"><circle cx="2" cy="2.300" r="1.900" fill="#3cf090"/><path d="M2 2.300h6" stroke="#3cf090" stroke-width="0.900"/><path d="M7.200 0.700l2.600 1.600l-2.600 1.600z" fill="#3cf090"/></svg>
<span class="t" style="left:178px;top:547px;font-size:6.44px;line-height:7px;color:#3cf090;transform:scaleX(0.832);-webkit-text-stroke:0.25px;">TIMB</span>
<svg style="left:180.6px;top:554.6px;" width="11" height="5" viewBox="0 0 11 5"><circle cx="2" cy="2.300" r="1.900" fill="#3cf090"/><path d="M2 2.300h6" stroke="#3cf090" stroke-width="0.900"/><path d="M7.200 0.700l2.600 1.600l-2.600 1.600z" fill="#3cf090"/></svg>
<span class="t" style="left:160.4px;top:562px;font-size:6.44px;line-height:7px;color:#3cf090;transform:scaleX(0.766);-webkit-text-stroke:0.25px;">REL</span>
<svg style="left:160.8px;top:569.2px;" width="11" height="5" viewBox="0 0 11 5"><circle cx="2" cy="2.300" r="1.900" fill="#3cf090"/><path d="M2 2.300h6" stroke="#3cf090" stroke-width="0.900"/><path d="M7.200 0.700l2.600 1.600l-2.600 1.600z" fill="#3cf090"/></svg>
<span class="t" style="left:177.9px;top:562px;font-size:6.44px;line-height:7px;color:#3cf090;transform:scaleX(0.741);-webkit-text-stroke:0.25px;">PRES</span>
<svg style="left:180.6px;top:569.2px;" width="11" height="5" viewBox="0 0 11 5"><circle cx="2" cy="2.300" r="1.900" fill="#3cf090"/><path d="M2 2.300h6" stroke="#3cf090" stroke-width="0.900"/><path d="M7.200 0.700l2.600 1.600l-2.600 1.600z" fill="#3cf090"/></svg>
<div style="left:153.7px;top:578.2px;width:41px;height:42px;background:#222522;border-radius:2px;"></div>
<span class="t" style="left:171.38px;top:594px;font-size:8.7px;line-height:10px;color:#9a9d9a;transform:scaleX(1.149);">+</span>
<div style="left:197px;top:491px;width:126.6px;height:22.2px;background:#000;"></div>
<span class="t" style="left:202.8px;top:531px;font-size:7.31px;line-height:9px;color:#dcdcdc;transform:scaleX(0.874);">Pitch</span>
<span class="t" style="left:222.8px;top:531px;font-size:7.31px;line-height:9px;color:#dcdcdc;transform:scaleX(0.833);">Shape</span>
<span class="t" style="left:246.4px;top:531px;font-size:7.31px;line-height:9px;color:#dcdcdc;transform:scaleX(0.876);">Sub</span>
<span class="t" style="left:264.6px;top:531px;font-size:7.31px;line-height:9px;color:#dcdcdc;transform:scaleX(0.874);">Sync</span>
<span class="t" style="left:281.8px;top:531px;font-size:7.31px;line-height:9px;color:#6e716e;transform:scaleX(0.896);">Unison</span>
<div style="left:199.7px;top:542.3px;width:19.4px;height:9.6px;background:#050705;border-radius:1.5px;"></div>
<div style="left:221.6px;top:542.3px;width:19.2px;height:9.6px;background:#050705;border-radius:1.5px;"></div>
<div style="left:243.3px;top:542.3px;width:17.3px;height:9.6px;background:#050705;border-radius:1.5px;"></div>
<div style="left:262.6px;top:542.3px;width:17px;height:9.6px;background:#050705;border-radius:1.5px;"></div>
<div style="left:282.5px;top:542.3px;width:17.6px;height:9.6px;background:#050705;border-radius:1.5px;"></div>
<div style="left:304px;top:542.3px;width:17.2px;height:9.6px;background:#050705;border-radius:1.5px;"></div>
<span class="t" style="left:211.09px;top:543px;font-size:6.09px;line-height:7px;color:#a8481c;transform:scaleX(1.034);">8'</span>
<div style="left:230.5px;top:543.7px;width:0.9px;height:7px;background:#a83424;"></div>
<div style="left:251.1px;top:543.7px;width:0.9px;height:7px;background:#a02c38;"></div>
<span class="t" style="left:268.4px;top:543px;font-size:6.44px;line-height:7px;color:#8a8d8a;transform:scaleX(1.034);">R</span>
<span class="t" style="left:292.35px;top:543px;font-size:6.09px;line-height:7px;color:#a8481c;transform:scaleX(1.034);">1x</span>
<div style="left:312.1px;top:543.7px;width:0.9px;height:7px;background:#b85028;"></div>
<div style="left:197px;top:556.7px;width:126.6px;height:22.2px;background:#000;"></div>
<span class="t" style="left:202.8px;top:596px;font-size:7.31px;line-height:9px;color:#dcdcdc;transform:scaleX(0.874);">Pitch</span>
<span class="t" style="left:222.8px;top:596px;font-size:7.31px;line-height:9px;color:#dcdcdc;transform:scaleX(0.833);">Shape</span>
<span class="t" style="left:246.4px;top:596px;font-size:7.31px;line-height:9px;color:#dcdcdc;transform:scaleX(0.876);">Sub</span>
<span class="t" style="left:264.6px;top:596px;font-size:7.31px;line-height:9px;color:#dcdcdc;transform:scaleX(0.874);">Sync</span>
<span class="t" style="left:281.8px;top:596px;font-size:7.31px;line-height:9px;color:#6e716e;transform:scaleX(0.896);">Unison</span>
<div style="left:199.7px;top:607.6px;width:19.4px;height:9.6px;background:#050705;border-radius:1.5px;"></div>
<div style="left:221.6px;top:607.6px;width:19.2px;height:9.6px;background:#050705;border-radius:1.5px;"></div>
<div style="left:243.3px;top:607.6px;width:17.3px;height:9.6px;background:#050705;border-radius:1.5px;"></div>
<div style="left:262.6px;top:607.6px;width:17px;height:9.6px;background:#050705;border-radius:1.5px;"></div>
<div style="left:282.5px;top:607.6px;width:17.6px;height:9.6px;background:#050705;border-radius:1.5px;"></div>
<div style="left:304px;top:607.6px;width:17.2px;height:9.6px;background:#050705;border-radius:1.5px;"></div>
<span class="t" style="left:211.09px;top:609px;font-size:6.09px;line-height:7px;color:#a8481c;transform:scaleX(1.034);">4'</span>
<div style="left:230.5px;top:609px;width:0.9px;height:7px;background:#b85028;"></div>
<div style="left:251.1px;top:609px;width:0.9px;height:7px;background:#a02c38;"></div>
<span class="t" style="left:268.4px;top:609px;font-size:6.44px;line-height:7px;color:#8a8d8a;transform:scaleX(1.034);">R</span>
<span class="t" style="left:292.35px;top:609px;font-size:6.09px;line-height:7px;color:#a8481c;transform:scaleX(1.034);">1x</span>
<div style="left:312.1px;top:609px;width:0.9px;height:7px;background:#a83434;"></div>
<div style="left:325.8px;top:492px;width:27.4px;height:9.1px;background:#f0781c;border-radius:1px;"></div>
<span class="t" style="left:333.2px;top:493px;font-size:6.96px;line-height:7px;color:#3a1402;transform:scaleX(1.018);font-weight:700;-webkit-text-stroke:0.1px;-webkit-text-stroke:0.15px;">MIX</span>
<div style="left:354.2px;top:492px;width:27px;height:9.1px;background:linear-gradient(#5a5d5a,#4c4f4c);border-radius:1px;"></div>
<span class="t" style="left:360.7px;top:493px;font-size:6.96px;line-height:7px;color:#ffffff;transform:scaleX(0.928);font-weight:700;-webkit-text-stroke:0.1px;-webkit-text-stroke:0.15px;">NEG</span>
<div style="left:382.2px;top:492px;width:27.8px;height:9.1px;background:linear-gradient(#5a5d5a,#4c4f4c);border-radius:1px;"></div>
<span class="t" style="left:387.6px;top:493px;font-size:6.96px;line-height:7px;color:#ffffff;transform:scaleX(0.956);font-weight:700;-webkit-text-stroke:0.1px;-webkit-text-stroke:0.15px;">WIPE</span>
<div style="left:325.8px;top:502px;width:27.4px;height:8.2px;background:linear-gradient(#5a5d5a,#4c4f4c);border-radius:1px;"></div>
<span class="t" style="left:334px;top:503px;font-size:6.96px;line-height:7px;color:#ffffff;transform:scaleX(1.016);font-weight:700;-webkit-text-stroke:0.1px;-webkit-text-stroke:0.15px;">AM</span>
<div style="left:354.2px;top:502px;width:27px;height:8.2px;background:linear-gradient(#5a5d5a,#4c4f4c);border-radius:1px;"></div>
<span class="t" style="left:359.7px;top:503px;font-size:6.96px;line-height:7px;color:#ffffff;transform:scaleX(0.940);font-weight:700;-webkit-text-stroke:0.1px;-webkit-text-stroke:0.15px;">SIGN</span>
<div style="left:382.2px;top:502px;width:27.8px;height:8.2px;background:linear-gradient(#5a5d5a,#4c4f4c);border-radius:1px;"></div>
<span class="t" style="left:388.6px;top:503px;font-size:6.96px;line-height:7px;color:#ffffff;transform:scaleX(0.970);font-weight:700;-webkit-text-stroke:0.1px;-webkit-text-stroke:0.15px;">MAX</span>
<div style="left:413px;top:492px;width:31.3px;height:9.1px;background:#f0781c;border-radius:1px;"></div>
<div style="left:413px;top:502px;width:31.3px;height:8.2px;background:linear-gradient(#5a5d5a,#4c4f4c);border-radius:1px;"></div>
<div style="left:445px;top:492px;width:31.1px;height:9.1px;background:linear-gradient(#5a5d5a,#4c4f4c);border-radius:1px;"></div>
<div style="left:445px;top:502px;width:31.1px;height:8.2px;background:linear-gradient(#5a5d5a,#4c4f4c);border-radius:1px;"></div>
<div style="left:477.2px;top:492px;width:31px;height:9.1px;background:linear-gradient(#5a5d5a,#4c4f4c);border-radius:1px;"></div>
<div style="left:477.2px;top:502px;width:31px;height:8.2px;background:linear-gradient(#5a5d5a,#4c4f4c);border-radius:1px;"></div>
<div style="left:509.2px;top:492px;width:30.9px;height:9.1px;background:linear-gradient(#5a5d5a,#4c4f4c);border-radius:1px;"></div>
<div style="left:509.2px;top:502px;width:30.9px;height:8.2px;background:linear-gradient(#5a5d5a,#4c4f4c);border-radius:1px;"></div>
<div style="left:325.4px;top:513.2px;width:85.2px;height:106.6px;background:#0c0f0c;border-radius:2px;"></div>
<span class="t" style="left:331.9px;top:539px;font-size:7.31px;line-height:9px;color:#e0e0e0;transform:scaleX(1.034);">1</span>
<span class="t" style="left:346.1px;top:539px;font-size:7.31px;line-height:9px;color:#4a4d4a;transform:scaleX(1.034);">2</span>
<span class="t" style="left:359.8px;top:539px;font-size:7.31px;line-height:9px;color:#8a8d8a;transform:scaleX(0.877);">Noise</span>
<span class="t" style="left:386.6px;top:572px;font-size:7.31px;line-height:9px;color:#b8bab8;transform:scaleX(0.914);">Drive</span>
<span class="t" style="left:334.5px;top:609px;font-size:7.31px;line-height:9px;color:#c8cac8;transform:scaleX(0.898);">Pitch</span>
<span class="t" style="left:355.4px;top:609px;font-size:7.31px;line-height:9px;color:#c8cac8;transform:scaleX(0.867);">Glide</span>
<div style="left:373px;top:609.8px;width:6.6px;height:6.6px;background:#c0c2c0;border-radius:1.2px;"></div>
<span class="t" style="left:374.65px;top:610px;font-size:5.22px;line-height:6px;color:#222;transform:scaleX(1.034);font-weight:700;-webkit-text-stroke:0.1px;">L</span>
<span class="t" style="left:390.6px;top:609px;font-size:7.31px;line-height:9px;color:#c8cac8;transform:scaleX(0.856);">FB</span>
<div style="left:412.4px;top:513.2px;width:128.2px;height:41.2px;background:#0c0f0c;border-radius:2px;"></div>
<span class="t" style="left:465.3px;top:542px;font-size:6.96px;line-height:7px;color:#e0e0e0;transform:scaleX(0.913);">OFF</span>
<div style="left:412.4px;top:555.6px;width:128.2px;height:64.6px;background:#1b1e1b;border-radius:2px;box-shadow:0 0 0 0.6px #262926;"></div>
<span class="t" style="left:449.5px;top:585px;font-size:6.96px;line-height:7px;color:#f0f0f0;transform:scaleX(1.034);font-weight:700;-webkit-text-stroke:0.1px;">A</span>
<span class="t" style="left:473.6px;top:585px;font-size:6.96px;line-height:7px;color:#f0f0f0;transform:scaleX(1.034);font-weight:700;-webkit-text-stroke:0.1px;">D</span>
<span class="t" style="left:497.9px;top:585px;font-size:6.96px;line-height:7px;color:#f0f0f0;transform:scaleX(1.034);font-weight:700;-webkit-text-stroke:0.1px;">S</span>
<span class="t" style="left:522.2px;top:585px;font-size:6.96px;line-height:7px;color:#f0f0f0;transform:scaleX(1.034);font-weight:700;-webkit-text-stroke:0.1px;">R</span>
<span class="t" style="left:422.8px;top:564px;font-size:6.44px;line-height:7px;color:#3cf090;transform:scaleX(0.816);-webkit-text-stroke:0.25px;">FEG</span>
<span class="t" style="left:422.8px;top:597px;font-size:6.44px;line-height:7px;color:#3cf090;transform:scaleX(0.794);-webkit-text-stroke:0.25px;">AEG</span>
<div style="left:543px;top:492.2px;width:41px;height:18.4px;background:#0a0c0a;border-radius:2px;"></div>
<div style="left:544.6px;top:493.4px;width:38px;height:1px;background:#26527c;"></div>
<span class="t" style="left:556.8px;top:499px;font-size:7.13px;line-height:8px;color:#f0f0f0;transform:scaleX(0.903);">Note</span>
<div style="left:543px;top:513.8px;width:41px;height:18.8px;background:#0a0c0a;border-radius:2px;"></div>
<div style="left:544.6px;top:515px;width:38px;height:1px;background:#26527c;"></div>
<span class="t" style="left:559.7px;top:520px;font-size:7.13px;line-height:8px;color:#f0f0f0;transform:scaleX(0.856);">FX</span>
<div style="left:543px;top:534.8px;width:41px;height:85.4px;background:#0c0f0c;border-radius:2px;"></div>
<span class="t" style="left:550.9px;top:552px;font-size:5.57px;line-height:6px;color:#5a5d5a;transform:scaleX(1.034);">L</span>
<span class="t" style="left:572.52px;top:552px;font-size:5.57px;line-height:6px;color:#5a5d5a;transform:scaleX(1.034);">R</span>
<span class="t" style="left:558.9px;top:610px;font-size:6.96px;line-height:7px;color:#e0e0e0;transform:scaleX(0.891);">Out</span>
<div style="left:589.8px;top:494px;width:6.2px;height:6px;background:#e8c020;"></div>
<span class="t" style="left:589.68px;top:551px;font-size:8.7px;line-height:10px;color:#5a5d5a;transform:scaleX(1.149);">+</span>
<div style="left:589.8px;top:604.6px;width:2.4px;height:13.6px;background:#4a8c28;"></div>
<div style="left:593.6px;top:604.6px;width:2.4px;height:13.6px;background:#4a8c28;"></div>
<svg style="left:0px;top:0px;" width="1160" height="653" viewBox="0 0 1160 653"><defs><radialGradient id="kn" cx="0.5" cy="0.3" r="0.8"><stop offset="0" stop-color="#858885"/><stop offset="0.6" stop-color="#5a5d5a"/><stop offset="1" stop-color="#3a3d3a"/></radialGradient><radialGradient id="kd" cx="0.5" cy="0.3" r="0.8"><stop offset="0" stop-color="#565956"/><stop offset="0.6" stop-color="#3c3f3c"/><stop offset="1" stop-color="#2a2d2a"/></radialGradient></defs><path d="M198.600 499.200L218.4 505.200L219.6 499.400L238.9 505.200L240.1 499.400L259.2 505.200L260.4 499.400L279.6 505.200L280.8 499.400L300 505.200L301.2 499.400L322.800 504.600" fill="none" stroke="#d86a1c" stroke-width="0.900"/><path d="M198.600 499.200L218.4 505.200L219.6 499.400L238.9 505.200L240.1 499.400L259.2 505.200L260.4 499.400L279.6 505.200L280.8 499.400L300 505.200L301.2 499.400L322.800 504.600" fill="none" stroke="#7a1410" stroke-width="0.900" stroke-dasharray="2.400 2.400"/><path d="M204.15 529.82A7.7 7.7 0 1 1 214.45 529.82" fill="none" stroke="#2c2f2c" stroke-width="1.3" stroke-linecap="butt"/><path d="M208.63 516.43A7.7 7.7 0 0 1 209.97 516.43" fill="none" stroke="#c8581c" stroke-width="1.6" stroke-linecap="butt"/><circle cx="209.3" cy="524.1" r="5.3" fill="url(#kn)"/><path d="M209.3 522.19L209.3 519.22" stroke="#fff" stroke-width="1.5" stroke-linecap="butt"/><path d="M200.7 515.7h3.200l-3.200 3.200z" fill="#f0f0f0"/><path d="M225.85 529.82A7.7 7.7 0 1 1 236.15 529.82" fill="none" stroke="#2c2f2c" stroke-width="1.3" stroke-linecap="butt"/><path d="M230.33 516.43A7.7 7.7 0 0 1 231.67 516.43" fill="none" stroke="#b8402c" stroke-width="1.6" stroke-linecap="butt"/><circle cx="231" cy="524.1" r="5.3" fill="url(#kn)"/><path d="M231 522.19L231 519.22" stroke="#fff" stroke-width="1.5" stroke-linecap="butt"/><path d="M222.4 515.7h3.200l-3.200 3.200z" fill="#f0f0f0"/><path d="M246.35 529.82A7.7 7.7 0 1 1 256.65 529.82" fill="none" stroke="#2c2f2c" stroke-width="1.3" stroke-linecap="butt"/><circle cx="251.5" cy="524.1" r="5.3" fill="url(#kn)"/><path d="M250.15 525.45L248.05 527.55" stroke="#fff" stroke-width="1.5" stroke-linecap="butt"/><path d="M242.9 515.7h3.200l-3.200 3.200z" fill="#f0f0f0"/><path d="M265.95 529.82A7.7 7.7 0 1 1 276.25 529.82" fill="none" stroke="#2c2f2c" stroke-width="1.3" stroke-linecap="butt"/><path d="M265.66 529.54A7.7 7.7 0 0 1 263.86 526.73" fill="none" stroke="#da2c30" stroke-width="1.6" stroke-linecap="butt"/><path d="M263.9 526.83A7.7 7.7 0 0 1 263.43 523.43" fill="none" stroke="#da2c30" stroke-width="1.6" stroke-linecap="butt"/><path d="M263.42 523.54A7.7 7.7 0 0 1 264.43 520.25" fill="none" stroke="#db302f" stroke-width="1.6" stroke-linecap="butt"/><circle cx="271.1" cy="524.1" r="5.3" fill="url(#kn)"/><path d="M269.45 523.15L266.88 521.66" stroke="#fff" stroke-width="1.5" stroke-linecap="butt"/><path d="M262.5 515.7h3.200l-3.200 3.200z" fill="#f0f0f0"/><path d="M286.25 529.82A7.7 7.7 0 1 1 296.55 529.82" fill="none" stroke="#2c2f2c" stroke-width="1.3" stroke-linecap="butt"/><path d="M285.96 529.54A7.7 7.7 0 1 1 296.84 529.54" fill="none" stroke="#6e3c16" stroke-width="1.6" stroke-linecap="butt"/><circle cx="291.4" cy="524.1" r="5.3" fill="url(#kd)"/><path d="M292.86 522.87L295.14 520.97" stroke="#8a8d8a" stroke-width="1.5" stroke-linecap="butt"/><path d="M282.8 515.7h3.200l-3.200 3.200z" fill="#f0f0f0"/><path d="M307.15 529.82A7.7 7.7 0 1 1 317.45 529.82" fill="none" stroke="#2c2f2c" stroke-width="1.3" stroke-linecap="butt"/><path d="M306.86 529.54A7.7 7.7 0 1 1 317.74 529.54" fill="none" stroke="#9a541a" stroke-width="1.6" stroke-linecap="butt"/><circle cx="312.3" cy="524.1" r="5.3" fill="url(#kn)"/><path d="M313.76 525.33L316.04 527.23" stroke="#fff" stroke-width="1.5" stroke-linecap="butt"/><g fill="none" stroke="#9a9d9a" stroke-width="0.800"><circle cx="310.800" cy="535.1" r="2"/><circle cx="313.600" cy="535.1" r="2"/></g><path d="M222.6 543.3h3l-3 3z" fill="#f0f0f0"/><path d="M305 543.3h3l-3 3z" fill="#f0f0f0"/><path d="M198.600 564.600H223.800V570.200H251.500V564.600H276.700V570.200H304V564.600H322.800" fill="none" stroke="#d05a18" stroke-width="0.900"/><path d="M204.15 595.32A7.7 7.7 0 1 1 214.45 595.32" fill="none" stroke="#2c2f2c" stroke-width="1.3" stroke-linecap="butt"/><path d="M208.63 581.93A7.7 7.7 0 0 1 209.97 581.93" fill="none" stroke="#4a6a9a" stroke-width="1.6" stroke-linecap="butt"/><circle cx="209.3" cy="589.6" r="5.3" fill="url(#kn)"/><path d="M209.3 587.69L209.3 584.72" stroke="#fff" stroke-width="1.5" stroke-linecap="butt"/><path d="M225.85 595.32A7.7 7.7 0 1 1 236.15 595.32" fill="none" stroke="#2c2f2c" stroke-width="1.3" stroke-linecap="butt"/><path d="M225.56 595.04A7.7 7.7 0 0 1 223.89 592.55" fill="none" stroke="#da2c30" stroke-width="1.6" stroke-linecap="butt"/><path d="M223.93 592.65A7.7 7.7 0 0 1 223.3 589.6" fill="none" stroke="#da2c30" stroke-width="1.6" stroke-linecap="butt"/><path d="M223.3 589.71A7.7 7.7 0 0 1 223.89 586.65" fill="none" stroke="#da2c30" stroke-width="1.6" stroke-linecap="butt"/><path d="M223.85 586.75A7.7 7.7 0 0 1 225.56 584.16" fill="none" stroke="#e14727" stroke-width="1.6" stroke-linecap="butt"/><path d="M225.48 584.23A7.7 7.7 0 0 1 228.05 582.49" fill="none" stroke="#e7601f" stroke-width="1.6" stroke-linecap="butt"/><path d="M227.95 582.53A7.7 7.7 0 0 1 231 581.9" fill="none" stroke="#ea6a1c" stroke-width="1.6" stroke-linecap="butt"/><circle cx="231" cy="589.6" r="5.3" fill="url(#kn)"/><path d="M229.65 590.95L227.55 593.05" stroke="#fff" stroke-width="1.5" stroke-linecap="butt"/><path d="M246.35 595.32A7.7 7.7 0 1 1 256.65 595.32" fill="none" stroke="#2c2f2c" stroke-width="1.3" stroke-linecap="butt"/><circle cx="251.5" cy="589.6" r="5.3" fill="url(#kn)"/><path d="M250.15 590.95L248.05 593.05" stroke="#fff" stroke-width="1.5" stroke-linecap="butt"/><path d="M265.95 595.32A7.7 7.7 0 1 1 276.25 595.32" fill="none" stroke="#2c2f2c" stroke-width="1.3" stroke-linecap="butt"/><circle cx="271.1" cy="589.6" r="5.3" fill="url(#kn)"/><path d="M269.75 590.95L267.65 593.05" stroke="#fff" stroke-width="1.5" stroke-linecap="butt"/><path d="M286.25 595.32A7.7 7.7 0 1 1 296.55 595.32" fill="none" stroke="#2c2f2c" stroke-width="1.3" stroke-linecap="butt"/><circle cx="291.4" cy="589.6" r="5.3" fill="url(#kd)"/><path d="M289.75 590.55L287.18 592.04" stroke="#8a8d8a" stroke-width="1.5" stroke-linecap="butt"/><path d="M307.15 595.32A7.7 7.7 0 1 1 317.45 595.32" fill="none" stroke="#2c2f2c" stroke-width="1.3" stroke-linecap="butt"/><path d="M306.86 595.04A7.7 7.7 0 1 1 317.74 595.04" fill="none" stroke="#9a541a" stroke-width="1.6" stroke-linecap="butt"/><circle cx="312.3" cy="589.6" r="5.3" fill="url(#kn)"/><path d="M313.76 590.83L316.04 592.73" stroke="#fff" stroke-width="1.5" stroke-linecap="butt"/><g fill="none" stroke="#9a9d9a" stroke-width="0.800"><circle cx="310.800" cy="600.4" r="2"/><circle cx="313.600" cy="600.4" r="2"/></g><path d="M425.400 495h3.400q1.800 0 2.600 3" fill="none" stroke="#5a1c04" stroke-width="1.100"/><path d="M425.400 508.600q0.800-3.200 2.800-3.200h3.200" fill="none" stroke="#e8e8e8" stroke-width="1"/><path d="M457.600 495.200h2.600q1.600 0.400 1.200 3.600" fill="none" stroke="#e8e8e8" stroke-width="1"/><path d="M462 495.800l1.800-1.800v2.600z" fill="#e8e8e8" stroke="#e8e8e8" stroke-width="0.600"/><path d="M463 506h-2.600q-1.600 0.400-1.200 3.200" fill="none" stroke="#e8e8e8" stroke-width="1"/><path d="M458.800 505.800l-1.800-1.600v2.600z" fill="#e8e8e8" stroke="#e8e8e8" stroke-width="0.600"/><path d="M490.200 498.600q2.600-6.600 5.200 0" fill="none" stroke="#e8e8e8" stroke-width="1"/><path d="M489.800 504.800l3 3.400l3-3.400" fill="none" stroke="#e8e8e8" stroke-width="1"/><path d="M522.400 499l2.400-4l2 3.600M524.200 497.200l2.800-2.800" fill="none" stroke="#e8e8e8" stroke-width="1"/><path d="M526 494.200h2v2z" fill="#e8e8e8"/><path d="M521.600 506.200h6" fill="none" stroke="#b8bab8" stroke-width="1.100"/><path d="M351.800 528.500h5M351.800 598.700h5" stroke="#3a3d3a" stroke-width="0.900"/><path d="M333.64 536.45A10.7 10.7 0 1 1 347.96 536.45" fill="none" stroke="#2c2f2c" stroke-width="1.3" stroke-linecap="butt"/><path d="M333.23 536.07A10.7 10.7 0 0 1 330.91 532.59" fill="none" stroke="#da2c30" stroke-width="1.6" stroke-linecap="butt"/><path d="M330.97 532.73A10.7 10.7 0 0 1 330.1 528.5" fill="none" stroke="#da2c30" stroke-width="1.6" stroke-linecap="butt"/><path d="M330.1 528.65A10.7 10.7 0 0 1 330.91 524.41" fill="none" stroke="#da2c30" stroke-width="1.6" stroke-linecap="butt"/><path d="M330.86 524.54A10.7 10.7 0 0 1 333.23 520.93" fill="none" stroke="#e14727" stroke-width="1.6" stroke-linecap="butt"/><path d="M333.13 521.04A10.7 10.7 0 0 1 336.71 518.61" fill="none" stroke="#e7601f" stroke-width="1.6" stroke-linecap="butt"/><path d="M336.57 518.67A10.7 10.7 0 0 1 340.8 517.8" fill="none" stroke="#ea6a1c" stroke-width="1.6" stroke-linecap="butt"/><circle cx="340.8" cy="528.5" r="7.2" fill="url(#kn)"/><path d="M338.97 530.33L336.12 533.18" stroke="#fff" stroke-width="1.7" stroke-linecap="butt"/><path d="M360.54 536.45A10.7 10.7 0 1 1 374.86 536.45" fill="none" stroke="#2c2f2c" stroke-width="1.3" stroke-linecap="butt"/><circle cx="367.7" cy="528.5" r="7.2" fill="url(#kn)"/><path d="M365.87 530.33L363.02 533.18" stroke="#fff" stroke-width="1.7" stroke-linecap="butt"/><path d="M387.34 536.45A10.7 10.7 0 1 1 401.66 536.45" fill="none" stroke="#2c2f2c" stroke-width="1.3" stroke-linecap="butt"/><path d="M393.57 517.84A10.7 10.7 0 0 1 395.43 517.84" fill="none" stroke="#d8342c" stroke-width="1.6" stroke-linecap="butt"/><circle cx="394.5" cy="528.5" r="7.2" fill="url(#kn)"/><path d="M394.5 525.91L394.5 521.88" stroke="#fff" stroke-width="1.7" stroke-linecap="butt"/><path d="M333.64 570.15A10.7 10.7 0 1 1 347.96 570.15" fill="none" stroke="#2c2f2c" stroke-width="1.3" stroke-linecap="butt"/><path d="M333.92 554A10.7 10.7 0 0 1 348.37 569.77" fill="none" stroke="#7a4216" stroke-width="1.6" stroke-linecap="butt"/><circle cx="340.8" cy="562.2" r="7.2" fill="url(#kd)"/><path d="M339.31 560.08L337 556.77" stroke="#8a8d8a" stroke-width="1.7" stroke-linecap="butt"/><path d="M360.54 570.15A10.7 10.7 0 1 1 374.86 570.15" fill="none" stroke="#2c2f2c" stroke-width="1.3" stroke-linecap="butt"/><circle cx="367.7" cy="562.2" r="7.2" fill="url(#kd)"/><path d="M365.87 564.03L363.02 566.88" stroke="#8a8d8a" stroke-width="1.7" stroke-linecap="butt"/><path d="M387.34 570.15A10.7 10.7 0 1 1 401.66 570.15" fill="none" stroke="#2c2f2c" stroke-width="1.3" stroke-linecap="butt"/><path d="M386.93 569.77A10.7 10.7 0 0 1 384.61 566.29" fill="none" stroke="#da2c30" stroke-width="1.6" stroke-linecap="butt"/><path d="M384.67 566.43A10.7 10.7 0 0 1 383.8 562.2" fill="none" stroke="#da2c30" stroke-width="1.6" stroke-linecap="butt"/><path d="M383.8 562.35A10.7 10.7 0 0 1 384.61 558.11" fill="none" stroke="#da2c30" stroke-width="1.6" stroke-linecap="butt"/><path d="M384.56 558.24A10.7 10.7 0 0 1 386.93 554.63" fill="none" stroke="#e14727" stroke-width="1.6" stroke-linecap="butt"/><path d="M386.83 554.74A10.7 10.7 0 0 1 390.41 552.31" fill="none" stroke="#e7601f" stroke-width="1.6" stroke-linecap="butt"/><path d="M390.27 552.37A10.7 10.7 0 0 1 394.5 551.5" fill="none" stroke="#ea6a1c" stroke-width="1.6" stroke-linecap="butt"/><circle cx="394.5" cy="562.2" r="7.2" fill="url(#kn)"/><path d="M394.5 559.61L394.5 555.58" stroke="#fff" stroke-width="1.7" stroke-linecap="butt"/><path d="M333.64 606.65A10.7 10.7 0 1 1 347.96 606.65" fill="none" stroke="#2c2f2c" stroke-width="1.3" stroke-linecap="butt"/><path d="M339.87 588.04A10.7 10.7 0 0 1 341.73 588.04" fill="none" stroke="#d8342c" stroke-width="1.6" stroke-linecap="butt"/><circle cx="340.8" cy="598.7" r="7.2" fill="url(#kn)"/><path d="M340.8 596.11L340.8 592.08" stroke="#fff" stroke-width="1.7" stroke-linecap="butt"/><path d="M360.54 606.65A10.7 10.7 0 1 1 374.86 606.65" fill="none" stroke="#2c2f2c" stroke-width="1.3" stroke-linecap="butt"/><circle cx="367.7" cy="598.7" r="7.2" fill="url(#kn)"/><path d="M365.87 600.53L363.02 603.38" stroke="#fff" stroke-width="1.7" stroke-linecap="butt"/><path d="M387.34 606.65A10.7 10.7 0 1 1 401.66 606.65" fill="none" stroke="#2c2f2c" stroke-width="1.3" stroke-linecap="butt"/><circle cx="394.5" cy="598.7" r="7.2" fill="url(#kn)"/><path d="M392.67 600.53L389.82 603.38" stroke="#fff" stroke-width="1.7" stroke-linecap="butt"/><path d="M387 541.200l1.600 1.200l-1.600 1.200z" fill="#d8d8d8"/><rect x="391.200" y="539.800" width="9.200" height="5.400" rx="1.600" fill="#f0f0f0"/><path d="M393.200 542.500h5.200" stroke="#111" stroke-width="0.900"/><path d="M394.400 541.200l-1.400 1.300l1.400 1.300M397.200 541.200l1.400 1.300l-1.400 1.300" fill="none" stroke="#111" stroke-width="0.700"/><path d="M335 576.800h7" stroke="#8a8d8a" stroke-width="1"/><path d="M346 575.800h3.400l-1.700 2z" fill="#c8c8c8"/><path d="M363.600 580.200q3.400-0.800 4-6.600q0.600 5.800 4 6.600q-2.200 0-4-1.600q-1.800 1.600-4 1.600z" fill="#6a6d6a" stroke="#6a6d6a" stroke-width="0.600" stroke-linejoin="round"/><path d="M420.84 536.45A10.7 10.7 0 1 1 435.16 536.45" fill="none" stroke="#2c2f2c" stroke-width="1.3" stroke-linecap="butt"/><path d="M420.43 536.07A10.7 10.7 0 0 1 418.11 532.59" fill="none" stroke="#da2c30" stroke-width="1.6" stroke-linecap="butt"/><path d="M418.17 532.73A10.7 10.7 0 0 1 417.3 528.5" fill="none" stroke="#da2c30" stroke-width="1.6" stroke-linecap="butt"/><path d="M417.3 528.65A10.7 10.7 0 0 1 418.11 524.41" fill="none" stroke="#da2c30" stroke-width="1.6" stroke-linecap="butt"/><path d="M418.06 524.54A10.7 10.7 0 0 1 420.43 520.93" fill="none" stroke="#e14727" stroke-width="1.6" stroke-linecap="butt"/><path d="M420.33 521.04A10.7 10.7 0 0 1 423.91 518.61" fill="none" stroke="#e7601f" stroke-width="1.6" stroke-linecap="butt"/><path d="M423.77 518.67A10.7 10.7 0 0 1 428 517.8" fill="none" stroke="#ea6a1c" stroke-width="1.6" stroke-linecap="butt"/><circle cx="428" cy="528.5" r="7.2" fill="url(#kn)"/><path d="M428.23 525.92L428.58 521.9" stroke="#fff" stroke-width="1.7" stroke-linecap="butt"/><path d="M444.54 536.45A10.7 10.7 0 1 1 458.86 536.45" fill="none" stroke="#2c2f2c" stroke-width="1.3" stroke-linecap="butt"/><path d="M444.13 536.07A10.7 10.7 0 0 1 441.65 532.16" fill="none" stroke="#da2c30" stroke-width="1.6" stroke-linecap="butt"/><path d="M441.7 532.3A10.7 10.7 0 0 1 441.04 527.57" fill="none" stroke="#da2c30" stroke-width="1.6" stroke-linecap="butt"/><path d="M441.03 527.72A10.7 10.7 0 0 1 442.43 523.15" fill="none" stroke="#db302f" stroke-width="1.6" stroke-linecap="butt"/><path d="M442.36 523.28A10.7 10.7 0 0 1 445.56 519.74" fill="none" stroke="#e45224" stroke-width="1.6" stroke-linecap="butt"/><circle cx="451.7" cy="528.5" r="7.2" fill="url(#kn)"/><path d="M450.6 526.15L448.9 522.5" stroke="#fff" stroke-width="1.7" stroke-linecap="butt"/><path d="M469.04 536.45A10.7 10.7 0 1 1 483.36 536.45" fill="none" stroke="#2c2f2c" stroke-width="1.3" stroke-linecap="butt"/><circle cx="476.2" cy="528.5" r="7.2" fill="url(#kd)"/><path d="M474.37 530.33L471.52 533.18" stroke="#8a8d8a" stroke-width="1.7" stroke-linecap="butt"/><path d="M493.44 536.45A10.7 10.7 0 1 1 507.76 536.45" fill="none" stroke="#2c2f2c" stroke-width="1.3" stroke-linecap="butt"/><path d="M493.03 536.07A10.7 10.7 0 0 1 490.71 532.59" fill="none" stroke="#da2c30" stroke-width="1.6" stroke-linecap="butt"/><path d="M490.77 532.73A10.7 10.7 0 0 1 489.9 528.5" fill="none" stroke="#da2c30" stroke-width="1.6" stroke-linecap="butt"/><path d="M489.9 528.65A10.7 10.7 0 0 1 490.71 524.41" fill="none" stroke="#da2c30" stroke-width="1.6" stroke-linecap="butt"/><path d="M490.66 524.54A10.7 10.7 0 0 1 493.03 520.93" fill="none" stroke="#e14727" stroke-width="1.6" stroke-linecap="butt"/><path d="M492.93 521.04A10.7 10.7 0 0 1 496.51 518.61" fill="none" stroke="#e7601f" stroke-width="1.6" stroke-linecap="butt"/><path d="M496.37 518.67A10.7 10.7 0 0 1 500.6 517.8" fill="none" stroke="#ea6a1c" stroke-width="1.6" stroke-linecap="butt"/><circle cx="500.6" cy="528.5" r="7.2" fill="url(#kn)"/><path d="M500.6 525.91L500.6 521.88" stroke="#fff" stroke-width="1.7" stroke-linecap="butt"/><path d="M517.64 536.45A10.7 10.7 0 1 1 531.96 536.45" fill="none" stroke="#2c2f2c" stroke-width="1.3" stroke-linecap="butt"/><path d="M523.87 517.84A10.7 10.7 0 0 1 525.73 517.84" fill="none" stroke="#d8342c" stroke-width="1.6" stroke-linecap="butt"/><circle cx="524.8" cy="528.5" r="7.2" fill="url(#kn)"/><path d="M524.8 525.91L524.8 521.88" stroke="#fff" stroke-width="1.7" stroke-linecap="butt"/><rect x="423.200" y="542.400" width="9.200" height="5.400" rx="1.600" fill="#f0f0f0"/><path d="M425.200 545.100h5.200" stroke="#111" stroke-width="0.900"/><path d="M426.400 543.800l-1.400 1.300l1.400 1.300M429.200 543.800l1.400 1.300l-1.400 1.300" fill="none" stroke="#111" stroke-width="0.700"/><path d="M448.600 548.200q3.400-0.800 4-6.400q0.600 5.600 4 6.400q-2.200 0-4-1.600q-1.800 1.600-4 1.600z" fill="#e4e4e4" stroke="#e4e4e4" stroke-width="0.600" stroke-linejoin="round"/><path d="M484 544.200h2.800l-1.400 1.800z" fill="#c8c8c8"/><path d="M494 545l1.600-1.400v2.800zM507.400 545l-1.600-1.400v2.800z" fill="#e0e0e0"/><rect x="496.600" y="542" width="8.200" height="6" fill="#e8e8e8"/><path d="M499.200 542v3.600M502.200 542v3.600" stroke="#111" stroke-width="0.900"/><rect x="517" y="542.400" width="9" height="5.400" rx="1.600" fill="#e8e8e8"/><path d="M519.400 543.600v3M523.600 543.600v3" stroke="#222" stroke-width="0.700"/><ellipse cx="521.500" cy="545.100" rx="1.100" ry="1.500" fill="none" stroke="#222" stroke-width="0.600"/><rect x="529.400" y="541.600" width="8.600" height="7" fill="#140606"/><path d="M530.600 547.600l6.200-5" stroke="#7a1a14" stroke-width="0.800"/><path d="M444.94 580.65A10.7 10.7 0 1 1 459.26 580.65" fill="none" stroke="#2c2f2c" stroke-width="1.3" stroke-linecap="butt"/><circle cx="452.1" cy="572.7" r="7.2" fill="url(#kn)"/><path d="M450.27 574.53L447.42 577.38" stroke="#fff" stroke-width="1.7" stroke-linecap="butt"/><path d="M469.04 580.65A10.7 10.7 0 1 1 483.36 580.65" fill="none" stroke="#2c2f2c" stroke-width="1.3" stroke-linecap="butt"/><path d="M468.63 580.27A10.7 10.7 0 0 1 466.31 576.79" fill="none" stroke="#da2c30" stroke-width="1.6" stroke-linecap="butt"/><path d="M466.37 576.93A10.7 10.7 0 0 1 465.5 572.7" fill="none" stroke="#da2c30" stroke-width="1.6" stroke-linecap="butt"/><path d="M465.5 572.85A10.7 10.7 0 0 1 466.31 568.61" fill="none" stroke="#da2c30" stroke-width="1.6" stroke-linecap="butt"/><path d="M466.26 568.74A10.7 10.7 0 0 1 468.63 565.13" fill="none" stroke="#e14727" stroke-width="1.6" stroke-linecap="butt"/><path d="M468.53 565.24A10.7 10.7 0 0 1 472.11 562.81" fill="none" stroke="#e7601f" stroke-width="1.6" stroke-linecap="butt"/><path d="M471.97 562.87A10.7 10.7 0 0 1 476.2 562" fill="none" stroke="#ea6a1c" stroke-width="1.6" stroke-linecap="butt"/><path d="M476.05 562A10.7 10.7 0 0 1 480.29 562.81" fill="none" stroke="#ea6a1c" stroke-width="1.6" stroke-linecap="butt"/><path d="M480.16 562.76A10.7 10.7 0 0 1 483.77 565.13" fill="none" stroke="#e7601f" stroke-width="1.6" stroke-linecap="butt"/><path d="M483.66 565.03A10.7 10.7 0 0 1 486.09 568.61" fill="none" stroke="#e14727" stroke-width="1.6" stroke-linecap="butt"/><path d="M486.03 568.47A10.7 10.7 0 0 1 486.9 572.7" fill="none" stroke="#da2c30" stroke-width="1.6" stroke-linecap="butt"/><circle cx="476.2" cy="572.7" r="7.2" fill="url(#kn)"/><path d="M478.79 572.7L482.82 572.7" stroke="#fff" stroke-width="1.7" stroke-linecap="butt"/><path d="M493.14 580.65A10.7 10.7 0 1 1 507.46 580.65" fill="none" stroke="#2c2f2c" stroke-width="1.3" stroke-linecap="butt"/><circle cx="500.3" cy="572.7" r="7.2" fill="url(#kn)"/><path d="M498.47 574.53L495.62 577.38" stroke="#fff" stroke-width="1.7" stroke-linecap="butt"/><path d="M517.64 580.65A10.7 10.7 0 1 1 531.96 580.65" fill="none" stroke="#2c2f2c" stroke-width="1.3" stroke-linecap="butt"/><circle cx="524.8" cy="572.7" r="7.2" fill="url(#kn)"/><path d="M522.97 574.53L520.12 577.38" stroke="#fff" stroke-width="1.7" stroke-linecap="butt"/><path d="M444.94 614.15A10.7 10.7 0 1 1 459.26 614.15" fill="none" stroke="#2c2f2c" stroke-width="1.3" stroke-linecap="butt"/><path d="M444.53 613.77A10.7 10.7 0 0 1 443.34 612.34" fill="none" stroke="#da2c30" stroke-width="1.6" stroke-linecap="butt"/><circle cx="452.1" cy="606.2" r="7.2" fill="url(#kn)"/><path d="M449.86 607.5L446.36 609.51" stroke="#fff" stroke-width="1.7" stroke-linecap="butt"/><path d="M469.04 614.15A10.7 10.7 0 1 1 483.36 614.15" fill="none" stroke="#2c2f2c" stroke-width="1.3" stroke-linecap="butt"/><path d="M468.63 613.77A10.7 10.7 0 0 1 466.31 610.29" fill="none" stroke="#da2c30" stroke-width="1.6" stroke-linecap="butt"/><path d="M466.37 610.43A10.7 10.7 0 0 1 465.5 606.2" fill="none" stroke="#da2c30" stroke-width="1.6" stroke-linecap="butt"/><path d="M465.5 606.35A10.7 10.7 0 0 1 466.31 602.11" fill="none" stroke="#da2c30" stroke-width="1.6" stroke-linecap="butt"/><path d="M466.26 602.24A10.7 10.7 0 0 1 468.63 598.63" fill="none" stroke="#e14727" stroke-width="1.6" stroke-linecap="butt"/><path d="M468.53 598.74A10.7 10.7 0 0 1 472.11 596.31" fill="none" stroke="#e7601f" stroke-width="1.6" stroke-linecap="butt"/><path d="M471.97 596.37A10.7 10.7 0 0 1 476.2 595.5" fill="none" stroke="#ea6a1c" stroke-width="1.6" stroke-linecap="butt"/><circle cx="476.2" cy="606.2" r="7.2" fill="url(#kn)"/><path d="M476.2 603.61L476.2 599.58" stroke="#fff" stroke-width="1.7" stroke-linecap="butt"/><path d="M493.14 614.15A10.7 10.7 0 1 1 507.46 614.15" fill="none" stroke="#2c2f2c" stroke-width="1.3" stroke-linecap="butt"/><path d="M492.73 613.77A10.7 10.7 0 0 1 490.37 610.18" fill="none" stroke="#da2c30" stroke-width="1.6" stroke-linecap="butt"/><path d="M490.42 610.32A10.7 10.7 0 0 1 489.6 605.95" fill="none" stroke="#da2c30" stroke-width="1.6" stroke-linecap="butt"/><path d="M489.6 606.09A10.7 10.7 0 0 1 490.57 601.76" fill="none" stroke="#da2c30" stroke-width="1.6" stroke-linecap="butt"/><path d="M490.51 601.89A10.7 10.7 0 0 1 493.1 598.28" fill="none" stroke="#e24a26" stroke-width="1.6" stroke-linecap="butt"/><path d="M492.99 598.38A10.7 10.7 0 0 1 496.8 596.09" fill="none" stroke="#e8621f" stroke-width="1.6" stroke-linecap="butt"/><path d="M496.66 596.14A10.7 10.7 0 0 1 501.06 595.53" fill="none" stroke="#ea6a1c" stroke-width="1.6" stroke-linecap="butt"/><path d="M500.91 595.52A10.7 10.7 0 0 1 505.2 596.69" fill="none" stroke="#ea6a1c" stroke-width="1.6" stroke-linecap="butt"/><path d="M505.07 596.62A10.7 10.7 0 0 1 508.55 599.39" fill="none" stroke="#e65b21" stroke-width="1.6" stroke-linecap="butt"/><path d="M508.46 599.27A10.7 10.7 0 0 1 510.57 603.19" fill="none" stroke="#df3f2a" stroke-width="1.6" stroke-linecap="butt"/><path d="M510.52 603.04A10.7 10.7 0 0 1 510.92 607.47" fill="none" stroke="#da2c30" stroke-width="1.6" stroke-linecap="butt"/><path d="M510.94 607.32A10.7 10.7 0 0 1 509.57 611.55" fill="none" stroke="#da2c30" stroke-width="1.6" stroke-linecap="butt"/><circle cx="500.3" cy="606.2" r="7.2" fill="url(#kn)"/><path d="M502.54 607.5L506.04 609.51" stroke="#fff" stroke-width="1.7" stroke-linecap="butt"/><path d="M517.64 614.15A10.7 10.7 0 1 1 531.96 614.15" fill="none" stroke="#2c2f2c" stroke-width="1.3" stroke-linecap="butt"/><path d="M517.23 613.77A10.7 10.7 0 0 1 514.75 609.86" fill="none" stroke="#da2c30" stroke-width="1.6" stroke-linecap="butt"/><path d="M514.8 610A10.7 10.7 0 0 1 514.14 605.27" fill="none" stroke="#da2c30" stroke-width="1.6" stroke-linecap="butt"/><path d="M514.13 605.42A10.7 10.7 0 0 1 515.53 600.85" fill="none" stroke="#db302f" stroke-width="1.6" stroke-linecap="butt"/><circle cx="524.8" cy="606.2" r="7.2" fill="url(#kn)"/><path d="M522.56 604.9L519.06 602.89" stroke="#fff" stroke-width="1.7" stroke-linecap="butt"/><path d="M424.400 577.5l1.800-4.400l1.800 2.400l2-0.600l1.800 2.600" fill="none" stroke="#3cf090" stroke-width="0.900"/><path d="M424.400 611.3l1.800-4.400l1.800 2.400l2-0.600l1.800 2.600" fill="none" stroke="#3cf090" stroke-width="0.900"/><path d="M558.21 553.85A7.6 7.6 0 1 1 568.39 553.85" fill="none" stroke="#2c2f2c" stroke-width="1.3" stroke-linecap="butt"/><path d="M562.64 540.63A7.6 7.6 0 0 1 563.96 540.63" fill="none" stroke="#b83828" stroke-width="1.6" stroke-linecap="butt"/><circle cx="563.3" cy="548.2" r="5" fill="url(#kn)"/><path d="M563.3 546.4L563.3 543.6" stroke="#fff" stroke-width="1.5" stroke-linecap="butt"/><path d="M548.78 578A7.8 7.8 0 1 1 559.22 578" fill="none" stroke="#2c2f2c" stroke-width="1.3" stroke-linecap="butt"/><path d="M548.48 577.72A7.8 7.8 0 0 1 546.79 575.18" fill="none" stroke="#da2c30" stroke-width="1.6" stroke-linecap="butt"/><path d="M546.84 575.29A7.8 7.8 0 0 1 546.2 572.2" fill="none" stroke="#da2c30" stroke-width="1.6" stroke-linecap="butt"/><path d="M546.2 572.31A7.8 7.8 0 0 1 546.79 569.22" fill="none" stroke="#da2c30" stroke-width="1.6" stroke-linecap="butt"/><path d="M546.75 569.32A7.8 7.8 0 0 1 548.48 566.68" fill="none" stroke="#e14727" stroke-width="1.6" stroke-linecap="butt"/><path d="M548.41 566.76A7.8 7.8 0 0 1 551.02 564.99" fill="none" stroke="#e7601f" stroke-width="1.6" stroke-linecap="butt"/><path d="M550.91 565.04A7.8 7.8 0 0 1 554 564.4" fill="none" stroke="#ea6a1c" stroke-width="1.6" stroke-linecap="butt"/><circle cx="554" cy="572.2" r="5.2" fill="url(#kn)"/><path d="M554 570.33L554 567.42" stroke="#fff" stroke-width="1.5" stroke-linecap="butt"/><path d="M567.58 578A7.8 7.8 0 1 1 578.02 578" fill="none" stroke="#2c2f2c" stroke-width="1.3" stroke-linecap="butt"/><path d="M567.28 577.72A7.8 7.8 0 0 1 565.54 575.04" fill="none" stroke="#da2c30" stroke-width="1.6" stroke-linecap="butt"/><path d="M565.58 575.14A7.8 7.8 0 0 1 565.01 571.89" fill="none" stroke="#da2c30" stroke-width="1.6" stroke-linecap="butt"/><path d="M565 572A7.8 7.8 0 0 1 565.78 568.79" fill="none" stroke="#da2c30" stroke-width="1.6" stroke-linecap="butt"/><path d="M565.74 568.89A7.8 7.8 0 0 1 567.74 566.26" fill="none" stroke="#e24c26" stroke-width="1.6" stroke-linecap="butt"/><path d="M567.66 566.34A7.8 7.8 0 0 1 570.54 564.73" fill="none" stroke="#e8641e" stroke-width="1.6" stroke-linecap="butt"/><path d="M570.44 564.77A7.8 7.8 0 0 1 573.73 564.46" fill="none" stroke="#ea6a1c" stroke-width="1.6" stroke-linecap="butt"/><path d="M573.62 564.44A7.8 7.8 0 0 1 576.75 565.48" fill="none" stroke="#ea6a1c" stroke-width="1.6" stroke-linecap="butt"/><path d="M576.66 565.42A7.8 7.8 0 0 1 579.12 567.63" fill="none" stroke="#e55722" stroke-width="1.6" stroke-linecap="butt"/><path d="M579.05 567.54A7.8 7.8 0 0 1 580.42 570.54" fill="none" stroke="#de3a2b" stroke-width="1.6" stroke-linecap="butt"/><path d="M580.4 570.44A7.8 7.8 0 0 1 580.45 573.74" fill="none" stroke="#da2c30" stroke-width="1.6" stroke-linecap="butt"/><path d="M580.47 573.63A7.8 7.8 0 0 1 579.19 576.67" fill="none" stroke="#da2c30" stroke-width="1.6" stroke-linecap="butt"/><circle cx="572.8" cy="572.2" r="5.2" fill="url(#kn)"/><path d="M574.33 573.27L576.72 574.94" stroke="#fff" stroke-width="1.5" stroke-linecap="butt"/><path d="M553.600 581v5.400" stroke="#8a8d8a" stroke-width="0.900"/><circle cx="553.600" cy="581.400" r="1.100" fill="#8a8d8a"/><path d="M562.400 582.600l1.600 1l-1.600 1z" fill="#8a8d8a"/><path d="M570.800 582.600h1.600l2.200-1.800v5.600l-2.200-1.800h-1.600z" fill="#9a9d9a"/><path d="M555.94 608.85A10.7 10.7 0 1 1 570.26 608.85" fill="none" stroke="#2c2f2c" stroke-width="1.3" stroke-linecap="butt"/><path d="M555.53 608.47A10.7 10.7 0 0 1 553.17 604.89" fill="none" stroke="#da2c30" stroke-width="1.6" stroke-linecap="butt"/><path d="M553.23 605.02A10.7 10.7 0 0 1 552.4 600.67" fill="none" stroke="#da2c30" stroke-width="1.6" stroke-linecap="butt"/><path d="M552.4 600.82A10.7 10.7 0 0 1 553.35 596.48" fill="none" stroke="#da2c30" stroke-width="1.6" stroke-linecap="butt"/><path d="M553.29 596.62A10.7 10.7 0 0 1 555.87 593.01" fill="none" stroke="#e24a26" stroke-width="1.6" stroke-linecap="butt"/><path d="M555.76 593.11A10.7 10.7 0 0 1 559.55 590.81" fill="none" stroke="#e8621f" stroke-width="1.6" stroke-linecap="butt"/><path d="M559.41 590.86A10.7 10.7 0 0 1 563.8 590.22" fill="none" stroke="#ea6a1c" stroke-width="1.6" stroke-linecap="butt"/><path d="M563.65 590.21A10.7 10.7 0 0 1 567.94 591.36" fill="none" stroke="#ea6a1c" stroke-width="1.6" stroke-linecap="butt"/><path d="M567.8 591.29A10.7 10.7 0 0 1 571.3 594.02" fill="none" stroke="#e65b21" stroke-width="1.6" stroke-linecap="butt"/><circle cx="563.1" cy="600.9" r="7.2" fill="url(#kn)"/><path d="M565.22 599.41L568.53 597.1" stroke="#fff" stroke-width="1.7" stroke-linecap="butt"/><path d="M490.400 548.400v11l2.600-2.400l1.900 4.200l1.900-0.900l-1.900-4h3.800z" fill="#fff" stroke="#000" stroke-width="1" stroke-linejoin="round"/></svg>
</section>
<section id="foot">
<div style="left:0px;top:629.4px;width:1160px;height:23.6px;background:#0c0e0c;"></div>
<div style="left:0px;top:647px;width:6px;height:6px;background:radial-gradient(circle at 1.5px 5.5px,#1c0c8a 0,rgba(20,10,100,0) 4px);"></div>
<div style="left:1153px;top:647px;width:7px;height:6px;background:radial-gradient(circle at 6.5px 5.5px,#4a0c98 0,rgba(60,10,120,0) 4px);"></div>
<span class="t" style="left:12.49px;top:637px;font-size:6.96px;line-height:7px;color:#e8581c;transform:scaleX(1.149);font-weight:700;-webkit-text-stroke:0.1px;">i</span>
<svg style="left:11.6px;top:636.4px;" width="4" height="9" viewBox="0 0 4 9"><circle cx="2" cy="1.400" r="0.900" fill="#e8581c"/><rect x="1.200" y="3" width="1.600" height="4.400" fill="#e8581c"/><rect x="0.400" y="6.800" width="3.200" height="1" fill="#e8581c"/></svg>
<div style="left:24.6px;top:634.6px;width:0.8px;height:12.4px;background:#4a4d4a;"></div>
<span class="t" style="left:34.4px;top:637px;font-size:6.44px;line-height:7px;color:#e8601c;transform:scaleX(0.998);">ARRANGE</span>
<span class="t" style="left:75px;top:637px;font-size:6.44px;line-height:7px;color:#d8d8d8;transform:scaleX(1.118);">MIX</span>
<span class="t" style="left:96.6px;top:637px;font-size:6.44px;line-height:7px;color:#d8d8d8;transform:scaleX(1.023);">EDIT</span>
<div style="left:121.2px;top:634.6px;width:0.8px;height:12.4px;background:#4a4d4a;"></div>
<svg style="left:129.6px;top:637px;" width="9" height="8" viewBox="0 0 9 8"><g fill="#d8d8d8"><rect x="0.600" y="0.800" width="1.600" height="1.200"/><rect x="3.400" y="3" width="1.600" height="1.200"/><rect x="5.800" y="1.600" width="1.600" height="1.200"/><rect x="0.600" y="5.600" width="1.400" height="1.200"/><rect x="2.800" y="5.600" width="1.400" height="1.200"/><rect x="5" y="5.600" width="1.400" height="1.200"/></g></svg>
<svg style="left:149px;top:637px;" width="8" height="8" viewBox="0 0 8 8"><circle cx="2" cy="5.600" r="1.500" fill="#d8d8d8"/><circle cx="5.600" cy="2.200" r="1.500" fill="#d8d8d8"/><path d="M2 5.600L5.600 2.200" stroke="#d8d8d8" stroke-width="1.200"/></svg>
<div style="left:167.4px;top:637px;width:8px;height:7.4px;background:#241008;border-radius:1.8px;border:1.3px solid #f0702c;box-sizing:border-box;"></div>
<svg style="left:186.8px;top:637.2px;" width="8" height="8" viewBox="0 0 8 8"><path d="M1 0v7M3.400 0v7M5.800 0v7" stroke="#d8d8d8" stroke-width="1.600"/></svg>
<svg style="left:1062.6px;top:636.8px;" width="9" height="8" viewBox="0 0 9 8"><path d="M0.400 1h3l0.800 1h4v5.400h-7.800z" fill="#e8581c"/><path d="M0.400 2.600h7.800" stroke="#b03010" stroke-width="0.500"/></svg>
<svg style="left:1082.6px;top:636.6px;" width="7" height="8" viewBox="0 0 7 8"><path d="M0.600 0.400h3.400l2 2v5.200h-5.400z" fill="#d0d2cc"/></svg>
<svg style="left:1100.4px;top:637px;" width="9" height="8" viewBox="0 0 9 8"><path d="M0.600 2.200h7M0.600 5.400h7" stroke="#d8d8d8" stroke-width="0.900"/><path d="M5 0.600l2 1.600l-2 1.600zM3.200 3.800l-2 1.600l2 1.600z" fill="#d8d8d8"/></svg>
<svg style="left:1118.6px;top:636.6px;" width="9" height="9" viewBox="0 0 9 9"><path d="M2.800 0.800h1.400v3h2.600q1 0 1 1v3h-5.400l-1.600-2.400l0.800-0.600l1.200 0.800z" fill="#d8d8d8"/></svg>
<div style="left:1135px;top:634.6px;width:0.8px;height:12.4px;background:#4a4d4a;"></div>
<svg style="left:1143.6px;top:637.2px;" width="8" height="8" viewBox="0 0 8 8"><rect x="0.200" y="0.200" width="7.200" height="6.800" fill="#d8d8d8"/><path d="M2.500 0.200v4.200M5.000 0.200v4.200" stroke="#0c0e0c" stroke-width="1.100"/><path d="M2.600 4.400v2.600M5 4.400v2.600" stroke="#0c0e0c" stroke-width="0.400"/></svg>
</section>
</div></body></html>
